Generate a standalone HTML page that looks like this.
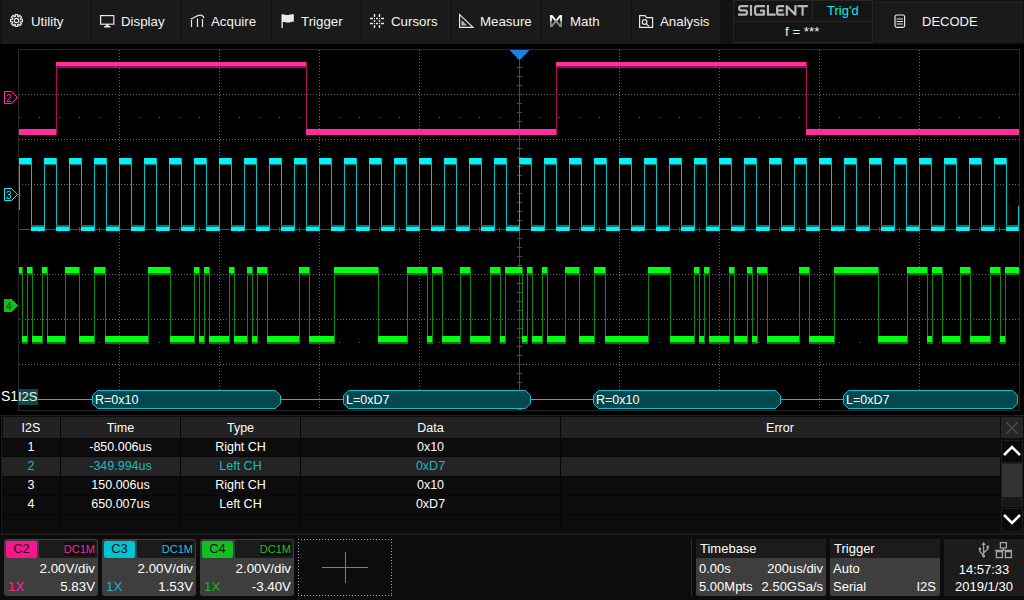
<!DOCTYPE html>
<html><head><meta charset="utf-8">
<style>
*{margin:0;padding:0;box-sizing:border-box}
html,body{width:1024px;height:600px;overflow:hidden;background:#000}
body{position:relative;font-family:"Liberation Sans",sans-serif;color:#fff}
.a{position:absolute}
.menu{left:0;top:0;width:1024px;height:44px;background:#1a1a1a}
.sep{top:0;width:1px;height:43px;background:#0e0e0e}
.mt{top:15px;font-size:13.3px;line-height:14px;color:#f4f4f4;white-space:nowrap}
.ic{top:0;left:0}
.tbl{left:0;top:415px;width:1024px;height:120px}
.th{font-size:12.5px;line-height:14px;text-align:center;white-space:nowrap}
.st{font-size:13px;line-height:14px;white-space:nowrap}
</style></head><body>
<!-- MENU -->
<div class="a menu"></div><div class="a" style="left:0;top:43px;width:720px;height:1px;background:#1e1e1e"></div><div class="a" style="left:0;top:0;width:2px;height:44px;background:#121212"></div>
<div class="a sep" style="left:91px"></div>
<div class="a sep" style="left:181px"></div>
<div class="a sep" style="left:271px"></div>
<div class="a sep" style="left:361px"></div>
<div class="a sep" style="left:451px"></div>
<div class="a sep" style="left:541px"></div>
<div class="a sep" style="left:631px"></div>
<div class="a" style="left:720px;top:0;width:13px;height:44px;background:#131313"></div>
<div class="a mt" style="left:31px">Utility</div>
<div class="a mt" style="left:121px">Display</div>
<div class="a mt" style="left:211px">Acquire</div>
<div class="a mt" style="left:301px">Trigger</div>
<div class="a mt" style="left:391px">Cursors</div>
<div class="a mt" style="left:480px">Measure</div>
<div class="a mt" style="left:570px">Math</div>
<div class="a mt" style="left:660px">Analysis</div>
<svg class="a ic" width="1024" height="44" viewBox="0 0 1024 44">
 <g fill="none" stroke="#e8e8e8" stroke-width="1.2">
  <!-- gear -->
  <path d="M20.52 19.27 L22.37 19.26 L22.37 21.74 L20.52 21.73 L20.21 22.47 L21.53 23.77 L19.77 25.53 L18.47 24.21 L17.73 24.52 L17.74 26.37 L15.26 26.37 L15.27 24.52 L14.53 24.21 L13.23 25.53 L11.47 23.77 L12.79 22.47 L12.48 21.73 L10.63 21.74 L10.63 19.26 L12.48 19.27 L12.79 18.53 L11.47 17.23 L13.23 15.47 L14.53 16.79 L15.27 16.48 L15.26 14.63 L17.74 14.63 L17.73 16.48 L18.47 16.79 L19.77 15.47 L21.53 17.23 L20.21 18.53Z"/>
  <circle cx="16.5" cy="20.5" r="2.2"/>
  <!-- monitor -->
  <rect x="100.6" y="15.6" width="13.2" height="8.6"/>
  <!-- acquire -->
  <path d="M190.5 19C194 18 197 15 200.5 15.2C202.5 15.3 203.5 16.5 204 18"/>
  <path d="M191.5 20V27M197.5 18.5V27M202.5 19V27"/>
  <!-- measure -->
  <path d="M459.6 14.6V27.4H473Z"/>
  <!-- analysis folder -->
  <path d="M639.6 15.6H645L646.6 17.6H652.6V27.4H639.6Z"/>
  <circle cx="644.6" cy="22" r="2.3"/>
  <path d="M646.4 23.8L649 26.4"/>
  <!-- math -->
  <path d="M550 15 552.3 15 556 19.5 559.7 15 562 15 562 21 560.2 21 560.2 17.6 556 22.4 551.8 17.6 551.8 21 550 21Z" fill="#f4f4f4" stroke="none"/>
  <path d="M550 27 552.3 27 556 22.5 559.7 27 562 27 562 21 560.2 21 560.2 24.4 556 19.6 551.8 24.4 551.8 21 550 21Z" fill="#8a8a8a" stroke="none"/>
  <!-- decode clipboard -->
  <rect x="895" y="15" width="9.6" height="12.4" rx="1.8"/>
  <path d="M896.5 19h6.5M896.5 21.5h6.5M896.5 24h6.5"/>
 </g>
 <g fill="#ececec">
  <rect x="106" y="24" width="2.5" height="2"/><rect x="104" y="26" width="6.5" height="1.4" rx=".6"/>
  <path d="M281.5 14.5C284 13.5 286 15.5 288 15C290 14.6 292 14 293.8 14.3V21.8C291.5 21.5 290 22.5 288 22.6C286 22.8 284.5 21.5 282.8 22V28H281.5Z"/>
  <path d="M373.8 14h1.4v3h-1.4zM378.8 14h1.4v3h-1.4zM373.8 20h1.4v2h-1.4zM378.8 20h1.4v2h-1.4zM373.8 25h1.4v3h-1.4zM378.8 25h1.4v3h-1.4zM370 17.8h3v1.4h-3zM376 17.8h2v1.4h-2zM381 17.8h3v1.4h-3zM370 22.8h3v1.4h-3zM376 22.8h2v1.4h-2zM381 22.8h3v1.4h-3z"/><path d="M374 18h1v1h-1zM379 18h1v1h-1zM374 23h1v1h-1zM379 23h1v1h-1z"/>
  <path d="M461.5 20V25.5H467Z" fill="#bbb"/>
  
  
 </g>
</svg>
<!-- SIGLENT box -->
<div class="a" style="left:733px;top:0;width:140px;height:43px;border:1px solid #262626;background:#141414"></div>
<div class="a" style="left:733px;top:21px;width:140px;height:1px;background:#262626"></div>
<div class="a" style="left:812px;top:0;width:1px;height:22px;background:#262626"></div>
<svg class="a" style="left:0;top:0" width="820" height="22" viewBox="0 0 820 22"><g fill="none" stroke="#b6b6b6" stroke-width="2.2" stroke-linejoin="round">
<path d="M748.2 6.1H741.2Q739.1 6.1 739.1 8.2V8.4Q739.1 10.4 741.2 10.4H745Q747 10.4 747 12.5V12.7Q747 14.7 745 14.7H738"/>
<path d="M751 5V15.8"/>
<path d="M765 6.1H757.1Q755.1 6.1 755.1 8.2V12.7Q755.1 14.7 757.1 14.7H763.9V10.6H760"/>
<path d="M767.9 5V14.7H775.6"/>
<path d="M784.2 6.1H779.1Q777.1 6.1 777.1 8.2V12.7Q777.1 14.7 779.1 14.7H784.2M777.6 10.4H783.4"/>
<path d="M786.8 15.8V6.2L795.4 14.6V5"/>
<path d="M797.4 6.1H807.9M802.6 6.1V15.8"/>
</g></svg>
<div class="a" style="left:827px;top:3px;font-size:13px;line-height:15px;color:#00eef2">Trig'd</div>
<div class="a" style="left:785px;top:25px;font-size:13.3px;line-height:14px;color:#f0f0f0">f = ***</div>
<div class="a" style="left:873px;top:0;width:151px;height:44px;background:#121212"></div><div class="a" style="left:874px;top:1px;width:149px;height:41px;background:#1a1a1a;border:1px solid #1e1e1e"></div>
<div class="a mt" style="left:922px;top:15px;font-size:13px">DECODE</div>
<svg class="a" style="left:0;top:0" width="1024" height="44" viewBox="0 0 1024 44"><g fill="none" stroke="#e8e8e8" stroke-width="1.2">
  <rect x="895" y="15" width="9.6" height="12.4" rx="1.8"/>
  <path d="M896.5 19h6.5M896.5 21.5h6.5M896.5 24h6.5"/></g></svg>

<!-- WAVE -->
<svg width="1024" height="600" viewBox="0 0 1024 600" shape-rendering="crispEdges" style="position:absolute;left:0;top:0"><rect x="18" y="49" width="1002" height="1" fill="#262626"/><rect x="18" y="410" width="1002" height="1" fill="#262626"/><rect x="18" y="49" width="1" height="362" fill="#262626"/><rect x="1019" y="49" width="1" height="362" fill="#262626"/><path d="M119 50h1v1h-1zM119 53h1v1h-1zM119 56h1v1h-1zM119 59h1v1h-1zM119 62h1v1h-1zM119 65h1v1h-1zM119 68h1v1h-1zM119 71h1v1h-1zM119 74h1v1h-1zM119 77h1v1h-1zM119 80h1v1h-1zM119 83h1v1h-1zM119 86h1v1h-1zM119 89h1v1h-1zM119 92h1v1h-1zM119 95h1v1h-1zM119 98h1v1h-1zM119 101h1v1h-1zM119 104h1v1h-1zM119 107h1v1h-1zM119 110h1v1h-1zM119 113h1v1h-1zM119 116h1v1h-1zM119 119h1v1h-1zM119 122h1v1h-1zM119 125h1v1h-1zM119 128h1v1h-1zM119 131h1v1h-1zM119 134h1v1h-1zM119 137h1v1h-1zM119 140h1v1h-1zM119 143h1v1h-1zM119 146h1v1h-1zM119 149h1v1h-1zM119 152h1v1h-1zM119 155h1v1h-1zM119 158h1v1h-1zM119 161h1v1h-1zM119 164h1v1h-1zM119 167h1v1h-1zM119 170h1v1h-1zM119 173h1v1h-1zM119 176h1v1h-1zM119 179h1v1h-1zM119 182h1v1h-1zM119 185h1v1h-1zM119 188h1v1h-1zM119 191h1v1h-1zM119 194h1v1h-1zM119 197h1v1h-1zM119 200h1v1h-1zM119 203h1v1h-1zM119 206h1v1h-1zM119 209h1v1h-1zM119 212h1v1h-1zM119 215h1v1h-1zM119 218h1v1h-1zM119 221h1v1h-1zM119 224h1v1h-1zM119 227h1v1h-1zM119 230h1v1h-1zM119 233h1v1h-1zM119 236h1v1h-1zM119 239h1v1h-1zM119 242h1v1h-1zM119 245h1v1h-1zM119 248h1v1h-1zM119 251h1v1h-1zM119 254h1v1h-1zM119 257h1v1h-1zM119 260h1v1h-1zM119 263h1v1h-1zM119 266h1v1h-1zM119 269h1v1h-1zM119 272h1v1h-1zM119 275h1v1h-1zM119 278h1v1h-1zM119 281h1v1h-1zM119 284h1v1h-1zM119 287h1v1h-1zM119 290h1v1h-1zM119 293h1v1h-1zM119 296h1v1h-1zM119 299h1v1h-1zM119 302h1v1h-1zM119 305h1v1h-1zM119 308h1v1h-1zM119 311h1v1h-1zM119 314h1v1h-1zM119 317h1v1h-1zM119 320h1v1h-1zM119 323h1v1h-1zM119 326h1v1h-1zM119 329h1v1h-1zM119 332h1v1h-1zM119 335h1v1h-1zM119 338h1v1h-1zM119 341h1v1h-1zM119 344h1v1h-1zM119 347h1v1h-1zM119 350h1v1h-1zM119 353h1v1h-1zM119 356h1v1h-1zM119 359h1v1h-1zM119 362h1v1h-1zM119 365h1v1h-1zM119 368h1v1h-1zM119 371h1v1h-1zM119 374h1v1h-1zM119 377h1v1h-1zM119 380h1v1h-1zM119 383h1v1h-1zM119 386h1v1h-1zM119 389h1v1h-1zM119 392h1v1h-1zM119 395h1v1h-1zM119 398h1v1h-1zM119 401h1v1h-1zM119 404h1v1h-1zM119 407h1v1h-1zM219 50h1v1h-1zM219 53h1v1h-1zM219 56h1v1h-1zM219 59h1v1h-1zM219 62h1v1h-1zM219 65h1v1h-1zM219 68h1v1h-1zM219 71h1v1h-1zM219 74h1v1h-1zM219 77h1v1h-1zM219 80h1v1h-1zM219 83h1v1h-1zM219 86h1v1h-1zM219 89h1v1h-1zM219 92h1v1h-1zM219 95h1v1h-1zM219 98h1v1h-1zM219 101h1v1h-1zM219 104h1v1h-1zM219 107h1v1h-1zM219 110h1v1h-1zM219 113h1v1h-1zM219 116h1v1h-1zM219 119h1v1h-1zM219 122h1v1h-1zM219 125h1v1h-1zM219 128h1v1h-1zM219 131h1v1h-1zM219 134h1v1h-1zM219 137h1v1h-1zM219 140h1v1h-1zM219 143h1v1h-1zM219 146h1v1h-1zM219 149h1v1h-1zM219 152h1v1h-1zM219 155h1v1h-1zM219 158h1v1h-1zM219 161h1v1h-1zM219 164h1v1h-1zM219 167h1v1h-1zM219 170h1v1h-1zM219 173h1v1h-1zM219 176h1v1h-1zM219 179h1v1h-1zM219 182h1v1h-1zM219 185h1v1h-1zM219 188h1v1h-1zM219 191h1v1h-1zM219 194h1v1h-1zM219 197h1v1h-1zM219 200h1v1h-1zM219 203h1v1h-1zM219 206h1v1h-1zM219 209h1v1h-1zM219 212h1v1h-1zM219 215h1v1h-1zM219 218h1v1h-1zM219 221h1v1h-1zM219 224h1v1h-1zM219 227h1v1h-1zM219 230h1v1h-1zM219 233h1v1h-1zM219 236h1v1h-1zM219 239h1v1h-1zM219 242h1v1h-1zM219 245h1v1h-1zM219 248h1v1h-1zM219 251h1v1h-1zM219 254h1v1h-1zM219 257h1v1h-1zM219 260h1v1h-1zM219 263h1v1h-1zM219 266h1v1h-1zM219 269h1v1h-1zM219 272h1v1h-1zM219 275h1v1h-1zM219 278h1v1h-1zM219 281h1v1h-1zM219 284h1v1h-1zM219 287h1v1h-1zM219 290h1v1h-1zM219 293h1v1h-1zM219 296h1v1h-1zM219 299h1v1h-1zM219 302h1v1h-1zM219 305h1v1h-1zM219 308h1v1h-1zM219 311h1v1h-1zM219 314h1v1h-1zM219 317h1v1h-1zM219 320h1v1h-1zM219 323h1v1h-1zM219 326h1v1h-1zM219 329h1v1h-1zM219 332h1v1h-1zM219 335h1v1h-1zM219 338h1v1h-1zM219 341h1v1h-1zM219 344h1v1h-1zM219 347h1v1h-1zM219 350h1v1h-1zM219 353h1v1h-1zM219 356h1v1h-1zM219 359h1v1h-1zM219 362h1v1h-1zM219 365h1v1h-1zM219 368h1v1h-1zM219 371h1v1h-1zM219 374h1v1h-1zM219 377h1v1h-1zM219 380h1v1h-1zM219 383h1v1h-1zM219 386h1v1h-1zM219 389h1v1h-1zM219 392h1v1h-1zM219 395h1v1h-1zM219 398h1v1h-1zM219 401h1v1h-1zM219 404h1v1h-1zM219 407h1v1h-1zM319 50h1v1h-1zM319 53h1v1h-1zM319 56h1v1h-1zM319 59h1v1h-1zM319 62h1v1h-1zM319 65h1v1h-1zM319 68h1v1h-1zM319 71h1v1h-1zM319 74h1v1h-1zM319 77h1v1h-1zM319 80h1v1h-1zM319 83h1v1h-1zM319 86h1v1h-1zM319 89h1v1h-1zM319 92h1v1h-1zM319 95h1v1h-1zM319 98h1v1h-1zM319 101h1v1h-1zM319 104h1v1h-1zM319 107h1v1h-1zM319 110h1v1h-1zM319 113h1v1h-1zM319 116h1v1h-1zM319 119h1v1h-1zM319 122h1v1h-1zM319 125h1v1h-1zM319 128h1v1h-1zM319 131h1v1h-1zM319 134h1v1h-1zM319 137h1v1h-1zM319 140h1v1h-1zM319 143h1v1h-1zM319 146h1v1h-1zM319 149h1v1h-1zM319 152h1v1h-1zM319 155h1v1h-1zM319 158h1v1h-1zM319 161h1v1h-1zM319 164h1v1h-1zM319 167h1v1h-1zM319 170h1v1h-1zM319 173h1v1h-1zM319 176h1v1h-1zM319 179h1v1h-1zM319 182h1v1h-1zM319 185h1v1h-1zM319 188h1v1h-1zM319 191h1v1h-1zM319 194h1v1h-1zM319 197h1v1h-1zM319 200h1v1h-1zM319 203h1v1h-1zM319 206h1v1h-1zM319 209h1v1h-1zM319 212h1v1h-1zM319 215h1v1h-1zM319 218h1v1h-1zM319 221h1v1h-1zM319 224h1v1h-1zM319 227h1v1h-1zM319 230h1v1h-1zM319 233h1v1h-1zM319 236h1v1h-1zM319 239h1v1h-1zM319 242h1v1h-1zM319 245h1v1h-1zM319 248h1v1h-1zM319 251h1v1h-1zM319 254h1v1h-1zM319 257h1v1h-1zM319 260h1v1h-1zM319 263h1v1h-1zM319 266h1v1h-1zM319 269h1v1h-1zM319 272h1v1h-1zM319 275h1v1h-1zM319 278h1v1h-1zM319 281h1v1h-1zM319 284h1v1h-1zM319 287h1v1h-1zM319 290h1v1h-1zM319 293h1v1h-1zM319 296h1v1h-1zM319 299h1v1h-1zM319 302h1v1h-1zM319 305h1v1h-1zM319 308h1v1h-1zM319 311h1v1h-1zM319 314h1v1h-1zM319 317h1v1h-1zM319 320h1v1h-1zM319 323h1v1h-1zM319 326h1v1h-1zM319 329h1v1h-1zM319 332h1v1h-1zM319 335h1v1h-1zM319 338h1v1h-1zM319 341h1v1h-1zM319 344h1v1h-1zM319 347h1v1h-1zM319 350h1v1h-1zM319 353h1v1h-1zM319 356h1v1h-1zM319 359h1v1h-1zM319 362h1v1h-1zM319 365h1v1h-1zM319 368h1v1h-1zM319 371h1v1h-1zM319 374h1v1h-1zM319 377h1v1h-1zM319 380h1v1h-1zM319 383h1v1h-1zM319 386h1v1h-1zM319 389h1v1h-1zM319 392h1v1h-1zM319 395h1v1h-1zM319 398h1v1h-1zM319 401h1v1h-1zM319 404h1v1h-1zM319 407h1v1h-1zM419 50h1v1h-1zM419 53h1v1h-1zM419 56h1v1h-1zM419 59h1v1h-1zM419 62h1v1h-1zM419 65h1v1h-1zM419 68h1v1h-1zM419 71h1v1h-1zM419 74h1v1h-1zM419 77h1v1h-1zM419 80h1v1h-1zM419 83h1v1h-1zM419 86h1v1h-1zM419 89h1v1h-1zM419 92h1v1h-1zM419 95h1v1h-1zM419 98h1v1h-1zM419 101h1v1h-1zM419 104h1v1h-1zM419 107h1v1h-1zM419 110h1v1h-1zM419 113h1v1h-1zM419 116h1v1h-1zM419 119h1v1h-1zM419 122h1v1h-1zM419 125h1v1h-1zM419 128h1v1h-1zM419 131h1v1h-1zM419 134h1v1h-1zM419 137h1v1h-1zM419 140h1v1h-1zM419 143h1v1h-1zM419 146h1v1h-1zM419 149h1v1h-1zM419 152h1v1h-1zM419 155h1v1h-1zM419 158h1v1h-1zM419 161h1v1h-1zM419 164h1v1h-1zM419 167h1v1h-1zM419 170h1v1h-1zM419 173h1v1h-1zM419 176h1v1h-1zM419 179h1v1h-1zM419 182h1v1h-1zM419 185h1v1h-1zM419 188h1v1h-1zM419 191h1v1h-1zM419 194h1v1h-1zM419 197h1v1h-1zM419 200h1v1h-1zM419 203h1v1h-1zM419 206h1v1h-1zM419 209h1v1h-1zM419 212h1v1h-1zM419 215h1v1h-1zM419 218h1v1h-1zM419 221h1v1h-1zM419 224h1v1h-1zM419 227h1v1h-1zM419 230h1v1h-1zM419 233h1v1h-1zM419 236h1v1h-1zM419 239h1v1h-1zM419 242h1v1h-1zM419 245h1v1h-1zM419 248h1v1h-1zM419 251h1v1h-1zM419 254h1v1h-1zM419 257h1v1h-1zM419 260h1v1h-1zM419 263h1v1h-1zM419 266h1v1h-1zM419 269h1v1h-1zM419 272h1v1h-1zM419 275h1v1h-1zM419 278h1v1h-1zM419 281h1v1h-1zM419 284h1v1h-1zM419 287h1v1h-1zM419 290h1v1h-1zM419 293h1v1h-1zM419 296h1v1h-1zM419 299h1v1h-1zM419 302h1v1h-1zM419 305h1v1h-1zM419 308h1v1h-1zM419 311h1v1h-1zM419 314h1v1h-1zM419 317h1v1h-1zM419 320h1v1h-1zM419 323h1v1h-1zM419 326h1v1h-1zM419 329h1v1h-1zM419 332h1v1h-1zM419 335h1v1h-1zM419 338h1v1h-1zM419 341h1v1h-1zM419 344h1v1h-1zM419 347h1v1h-1zM419 350h1v1h-1zM419 353h1v1h-1zM419 356h1v1h-1zM419 359h1v1h-1zM419 362h1v1h-1zM419 365h1v1h-1zM419 368h1v1h-1zM419 371h1v1h-1zM419 374h1v1h-1zM419 377h1v1h-1zM419 380h1v1h-1zM419 383h1v1h-1zM419 386h1v1h-1zM419 389h1v1h-1zM419 392h1v1h-1zM419 395h1v1h-1zM419 398h1v1h-1zM419 401h1v1h-1zM419 404h1v1h-1zM419 407h1v1h-1zM619 50h1v1h-1zM619 53h1v1h-1zM619 56h1v1h-1zM619 59h1v1h-1zM619 62h1v1h-1zM619 65h1v1h-1zM619 68h1v1h-1zM619 71h1v1h-1zM619 74h1v1h-1zM619 77h1v1h-1zM619 80h1v1h-1zM619 83h1v1h-1zM619 86h1v1h-1zM619 89h1v1h-1zM619 92h1v1h-1zM619 95h1v1h-1zM619 98h1v1h-1zM619 101h1v1h-1zM619 104h1v1h-1zM619 107h1v1h-1zM619 110h1v1h-1zM619 113h1v1h-1zM619 116h1v1h-1zM619 119h1v1h-1zM619 122h1v1h-1zM619 125h1v1h-1zM619 128h1v1h-1zM619 131h1v1h-1zM619 134h1v1h-1zM619 137h1v1h-1zM619 140h1v1h-1zM619 143h1v1h-1zM619 146h1v1h-1zM619 149h1v1h-1zM619 152h1v1h-1zM619 155h1v1h-1zM619 158h1v1h-1zM619 161h1v1h-1zM619 164h1v1h-1zM619 167h1v1h-1zM619 170h1v1h-1zM619 173h1v1h-1zM619 176h1v1h-1zM619 179h1v1h-1zM619 182h1v1h-1zM619 185h1v1h-1zM619 188h1v1h-1zM619 191h1v1h-1zM619 194h1v1h-1zM619 197h1v1h-1zM619 200h1v1h-1zM619 203h1v1h-1zM619 206h1v1h-1zM619 209h1v1h-1zM619 212h1v1h-1zM619 215h1v1h-1zM619 218h1v1h-1zM619 221h1v1h-1zM619 224h1v1h-1zM619 227h1v1h-1zM619 230h1v1h-1zM619 233h1v1h-1zM619 236h1v1h-1zM619 239h1v1h-1zM619 242h1v1h-1zM619 245h1v1h-1zM619 248h1v1h-1zM619 251h1v1h-1zM619 254h1v1h-1zM619 257h1v1h-1zM619 260h1v1h-1zM619 263h1v1h-1zM619 266h1v1h-1zM619 269h1v1h-1zM619 272h1v1h-1zM619 275h1v1h-1zM619 278h1v1h-1zM619 281h1v1h-1zM619 284h1v1h-1zM619 287h1v1h-1zM619 290h1v1h-1zM619 293h1v1h-1zM619 296h1v1h-1zM619 299h1v1h-1zM619 302h1v1h-1zM619 305h1v1h-1zM619 308h1v1h-1zM619 311h1v1h-1zM619 314h1v1h-1zM619 317h1v1h-1zM619 320h1v1h-1zM619 323h1v1h-1zM619 326h1v1h-1zM619 329h1v1h-1zM619 332h1v1h-1zM619 335h1v1h-1zM619 338h1v1h-1zM619 341h1v1h-1zM619 344h1v1h-1zM619 347h1v1h-1zM619 350h1v1h-1zM619 353h1v1h-1zM619 356h1v1h-1zM619 359h1v1h-1zM619 362h1v1h-1zM619 365h1v1h-1zM619 368h1v1h-1zM619 371h1v1h-1zM619 374h1v1h-1zM619 377h1v1h-1zM619 380h1v1h-1zM619 383h1v1h-1zM619 386h1v1h-1zM619 389h1v1h-1zM619 392h1v1h-1zM619 395h1v1h-1zM619 398h1v1h-1zM619 401h1v1h-1zM619 404h1v1h-1zM619 407h1v1h-1zM719 50h1v1h-1zM719 53h1v1h-1zM719 56h1v1h-1zM719 59h1v1h-1zM719 62h1v1h-1zM719 65h1v1h-1zM719 68h1v1h-1zM719 71h1v1h-1zM719 74h1v1h-1zM719 77h1v1h-1zM719 80h1v1h-1zM719 83h1v1h-1zM719 86h1v1h-1zM719 89h1v1h-1zM719 92h1v1h-1zM719 95h1v1h-1zM719 98h1v1h-1zM719 101h1v1h-1zM719 104h1v1h-1zM719 107h1v1h-1zM719 110h1v1h-1zM719 113h1v1h-1zM719 116h1v1h-1zM719 119h1v1h-1zM719 122h1v1h-1zM719 125h1v1h-1zM719 128h1v1h-1zM719 131h1v1h-1zM719 134h1v1h-1zM719 137h1v1h-1zM719 140h1v1h-1zM719 143h1v1h-1zM719 146h1v1h-1zM719 149h1v1h-1zM719 152h1v1h-1zM719 155h1v1h-1zM719 158h1v1h-1zM719 161h1v1h-1zM719 164h1v1h-1zM719 167h1v1h-1zM719 170h1v1h-1zM719 173h1v1h-1zM719 176h1v1h-1zM719 179h1v1h-1zM719 182h1v1h-1zM719 185h1v1h-1zM719 188h1v1h-1zM719 191h1v1h-1zM719 194h1v1h-1zM719 197h1v1h-1zM719 200h1v1h-1zM719 203h1v1h-1zM719 206h1v1h-1zM719 209h1v1h-1zM719 212h1v1h-1zM719 215h1v1h-1zM719 218h1v1h-1zM719 221h1v1h-1zM719 224h1v1h-1zM719 227h1v1h-1zM719 230h1v1h-1zM719 233h1v1h-1zM719 236h1v1h-1zM719 239h1v1h-1zM719 242h1v1h-1zM719 245h1v1h-1zM719 248h1v1h-1zM719 251h1v1h-1zM719 254h1v1h-1zM719 257h1v1h-1zM719 260h1v1h-1zM719 263h1v1h-1zM719 266h1v1h-1zM719 269h1v1h-1zM719 272h1v1h-1zM719 275h1v1h-1zM719 278h1v1h-1zM719 281h1v1h-1zM719 284h1v1h-1zM719 287h1v1h-1zM719 290h1v1h-1zM719 293h1v1h-1zM719 296h1v1h-1zM719 299h1v1h-1zM719 302h1v1h-1zM719 305h1v1h-1zM719 308h1v1h-1zM719 311h1v1h-1zM719 314h1v1h-1zM719 317h1v1h-1zM719 320h1v1h-1zM719 323h1v1h-1zM719 326h1v1h-1zM719 329h1v1h-1zM719 332h1v1h-1zM719 335h1v1h-1zM719 338h1v1h-1zM719 341h1v1h-1zM719 344h1v1h-1zM719 347h1v1h-1zM719 350h1v1h-1zM719 353h1v1h-1zM719 356h1v1h-1zM719 359h1v1h-1zM719 362h1v1h-1zM719 365h1v1h-1zM719 368h1v1h-1zM719 371h1v1h-1zM719 374h1v1h-1zM719 377h1v1h-1zM719 380h1v1h-1zM719 383h1v1h-1zM719 386h1v1h-1zM719 389h1v1h-1zM719 392h1v1h-1zM719 395h1v1h-1zM719 398h1v1h-1zM719 401h1v1h-1zM719 404h1v1h-1zM719 407h1v1h-1zM819 50h1v1h-1zM819 53h1v1h-1zM819 56h1v1h-1zM819 59h1v1h-1zM819 62h1v1h-1zM819 65h1v1h-1zM819 68h1v1h-1zM819 71h1v1h-1zM819 74h1v1h-1zM819 77h1v1h-1zM819 80h1v1h-1zM819 83h1v1h-1zM819 86h1v1h-1zM819 89h1v1h-1zM819 92h1v1h-1zM819 95h1v1h-1zM819 98h1v1h-1zM819 101h1v1h-1zM819 104h1v1h-1zM819 107h1v1h-1zM819 110h1v1h-1zM819 113h1v1h-1zM819 116h1v1h-1zM819 119h1v1h-1zM819 122h1v1h-1zM819 125h1v1h-1zM819 128h1v1h-1zM819 131h1v1h-1zM819 134h1v1h-1zM819 137h1v1h-1zM819 140h1v1h-1zM819 143h1v1h-1zM819 146h1v1h-1zM819 149h1v1h-1zM819 152h1v1h-1zM819 155h1v1h-1zM819 158h1v1h-1zM819 161h1v1h-1zM819 164h1v1h-1zM819 167h1v1h-1zM819 170h1v1h-1zM819 173h1v1h-1zM819 176h1v1h-1zM819 179h1v1h-1zM819 182h1v1h-1zM819 185h1v1h-1zM819 188h1v1h-1zM819 191h1v1h-1zM819 194h1v1h-1zM819 197h1v1h-1zM819 200h1v1h-1zM819 203h1v1h-1zM819 206h1v1h-1zM819 209h1v1h-1zM819 212h1v1h-1zM819 215h1v1h-1zM819 218h1v1h-1zM819 221h1v1h-1zM819 224h1v1h-1zM819 227h1v1h-1zM819 230h1v1h-1zM819 233h1v1h-1zM819 236h1v1h-1zM819 239h1v1h-1zM819 242h1v1h-1zM819 245h1v1h-1zM819 248h1v1h-1zM819 251h1v1h-1zM819 254h1v1h-1zM819 257h1v1h-1zM819 260h1v1h-1zM819 263h1v1h-1zM819 266h1v1h-1zM819 269h1v1h-1zM819 272h1v1h-1zM819 275h1v1h-1zM819 278h1v1h-1zM819 281h1v1h-1zM819 284h1v1h-1zM819 287h1v1h-1zM819 290h1v1h-1zM819 293h1v1h-1zM819 296h1v1h-1zM819 299h1v1h-1zM819 302h1v1h-1zM819 305h1v1h-1zM819 308h1v1h-1zM819 311h1v1h-1zM819 314h1v1h-1zM819 317h1v1h-1zM819 320h1v1h-1zM819 323h1v1h-1zM819 326h1v1h-1zM819 329h1v1h-1zM819 332h1v1h-1zM819 335h1v1h-1zM819 338h1v1h-1zM819 341h1v1h-1zM819 344h1v1h-1zM819 347h1v1h-1zM819 350h1v1h-1zM819 353h1v1h-1zM819 356h1v1h-1zM819 359h1v1h-1zM819 362h1v1h-1zM819 365h1v1h-1zM819 368h1v1h-1zM819 371h1v1h-1zM819 374h1v1h-1zM819 377h1v1h-1zM819 380h1v1h-1zM819 383h1v1h-1zM819 386h1v1h-1zM819 389h1v1h-1zM819 392h1v1h-1zM819 395h1v1h-1zM819 398h1v1h-1zM819 401h1v1h-1zM819 404h1v1h-1zM819 407h1v1h-1zM919 50h1v1h-1zM919 53h1v1h-1zM919 56h1v1h-1zM919 59h1v1h-1zM919 62h1v1h-1zM919 65h1v1h-1zM919 68h1v1h-1zM919 71h1v1h-1zM919 74h1v1h-1zM919 77h1v1h-1zM919 80h1v1h-1zM919 83h1v1h-1zM919 86h1v1h-1zM919 89h1v1h-1zM919 92h1v1h-1zM919 95h1v1h-1zM919 98h1v1h-1zM919 101h1v1h-1zM919 104h1v1h-1zM919 107h1v1h-1zM919 110h1v1h-1zM919 113h1v1h-1zM919 116h1v1h-1zM919 119h1v1h-1zM919 122h1v1h-1zM919 125h1v1h-1zM919 128h1v1h-1zM919 131h1v1h-1zM919 134h1v1h-1zM919 137h1v1h-1zM919 140h1v1h-1zM919 143h1v1h-1zM919 146h1v1h-1zM919 149h1v1h-1zM919 152h1v1h-1zM919 155h1v1h-1zM919 158h1v1h-1zM919 161h1v1h-1zM919 164h1v1h-1zM919 167h1v1h-1zM919 170h1v1h-1zM919 173h1v1h-1zM919 176h1v1h-1zM919 179h1v1h-1zM919 182h1v1h-1zM919 185h1v1h-1zM919 188h1v1h-1zM919 191h1v1h-1zM919 194h1v1h-1zM919 197h1v1h-1zM919 200h1v1h-1zM919 203h1v1h-1zM919 206h1v1h-1zM919 209h1v1h-1zM919 212h1v1h-1zM919 215h1v1h-1zM919 218h1v1h-1zM919 221h1v1h-1zM919 224h1v1h-1zM919 227h1v1h-1zM919 230h1v1h-1zM919 233h1v1h-1zM919 236h1v1h-1zM919 239h1v1h-1zM919 242h1v1h-1zM919 245h1v1h-1zM919 248h1v1h-1zM919 251h1v1h-1zM919 254h1v1h-1zM919 257h1v1h-1zM919 260h1v1h-1zM919 263h1v1h-1zM919 266h1v1h-1zM919 269h1v1h-1zM919 272h1v1h-1zM919 275h1v1h-1zM919 278h1v1h-1zM919 281h1v1h-1zM919 284h1v1h-1zM919 287h1v1h-1zM919 290h1v1h-1zM919 293h1v1h-1zM919 296h1v1h-1zM919 299h1v1h-1zM919 302h1v1h-1zM919 305h1v1h-1zM919 308h1v1h-1zM919 311h1v1h-1zM919 314h1v1h-1zM919 317h1v1h-1zM919 320h1v1h-1zM919 323h1v1h-1zM919 326h1v1h-1zM919 329h1v1h-1zM919 332h1v1h-1zM919 335h1v1h-1zM919 338h1v1h-1zM919 341h1v1h-1zM919 344h1v1h-1zM919 347h1v1h-1zM919 350h1v1h-1zM919 353h1v1h-1zM919 356h1v1h-1zM919 359h1v1h-1zM919 362h1v1h-1zM919 365h1v1h-1zM919 368h1v1h-1zM919 371h1v1h-1zM919 374h1v1h-1zM919 377h1v1h-1zM919 380h1v1h-1zM919 383h1v1h-1zM919 386h1v1h-1zM919 389h1v1h-1zM919 392h1v1h-1zM919 395h1v1h-1zM919 398h1v1h-1zM919 401h1v1h-1zM919 404h1v1h-1zM919 407h1v1h-1zM19 94h1v1h-1zM22 94h1v1h-1zM25 94h1v1h-1zM28 94h1v1h-1zM31 94h1v1h-1zM34 94h1v1h-1zM37 94h1v1h-1zM40 94h1v1h-1zM43 94h1v1h-1zM46 94h1v1h-1zM49 94h1v1h-1zM52 94h1v1h-1zM55 94h1v1h-1zM58 94h1v1h-1zM61 94h1v1h-1zM64 94h1v1h-1zM67 94h1v1h-1zM70 94h1v1h-1zM73 94h1v1h-1zM76 94h1v1h-1zM79 94h1v1h-1zM82 94h1v1h-1zM85 94h1v1h-1zM88 94h1v1h-1zM91 94h1v1h-1zM94 94h1v1h-1zM97 94h1v1h-1zM100 94h1v1h-1zM103 94h1v1h-1zM106 94h1v1h-1zM109 94h1v1h-1zM112 94h1v1h-1zM115 94h1v1h-1zM118 94h1v1h-1zM121 94h1v1h-1zM124 94h1v1h-1zM127 94h1v1h-1zM130 94h1v1h-1zM133 94h1v1h-1zM136 94h1v1h-1zM139 94h1v1h-1zM142 94h1v1h-1zM145 94h1v1h-1zM148 94h1v1h-1zM151 94h1v1h-1zM154 94h1v1h-1zM157 94h1v1h-1zM160 94h1v1h-1zM163 94h1v1h-1zM166 94h1v1h-1zM169 94h1v1h-1zM172 94h1v1h-1zM175 94h1v1h-1zM178 94h1v1h-1zM181 94h1v1h-1zM184 94h1v1h-1zM187 94h1v1h-1zM190 94h1v1h-1zM193 94h1v1h-1zM196 94h1v1h-1zM199 94h1v1h-1zM202 94h1v1h-1zM205 94h1v1h-1zM208 94h1v1h-1zM211 94h1v1h-1zM214 94h1v1h-1zM217 94h1v1h-1zM220 94h1v1h-1zM223 94h1v1h-1zM226 94h1v1h-1zM229 94h1v1h-1zM232 94h1v1h-1zM235 94h1v1h-1zM238 94h1v1h-1zM241 94h1v1h-1zM244 94h1v1h-1zM247 94h1v1h-1zM250 94h1v1h-1zM253 94h1v1h-1zM256 94h1v1h-1zM259 94h1v1h-1zM262 94h1v1h-1zM265 94h1v1h-1zM268 94h1v1h-1zM271 94h1v1h-1zM274 94h1v1h-1zM277 94h1v1h-1zM280 94h1v1h-1zM283 94h1v1h-1zM286 94h1v1h-1zM289 94h1v1h-1zM292 94h1v1h-1zM295 94h1v1h-1zM298 94h1v1h-1zM301 94h1v1h-1zM304 94h1v1h-1zM307 94h1v1h-1zM310 94h1v1h-1zM313 94h1v1h-1zM316 94h1v1h-1zM319 94h1v1h-1zM322 94h1v1h-1zM325 94h1v1h-1zM328 94h1v1h-1zM331 94h1v1h-1zM334 94h1v1h-1zM337 94h1v1h-1zM340 94h1v1h-1zM343 94h1v1h-1zM346 94h1v1h-1zM349 94h1v1h-1zM352 94h1v1h-1zM355 94h1v1h-1zM358 94h1v1h-1zM361 94h1v1h-1zM364 94h1v1h-1zM367 94h1v1h-1zM370 94h1v1h-1zM373 94h1v1h-1zM376 94h1v1h-1zM379 94h1v1h-1zM382 94h1v1h-1zM385 94h1v1h-1zM388 94h1v1h-1zM391 94h1v1h-1zM394 94h1v1h-1zM397 94h1v1h-1zM400 94h1v1h-1zM403 94h1v1h-1zM406 94h1v1h-1zM409 94h1v1h-1zM412 94h1v1h-1zM415 94h1v1h-1zM418 94h1v1h-1zM421 94h1v1h-1zM424 94h1v1h-1zM427 94h1v1h-1zM430 94h1v1h-1zM433 94h1v1h-1zM436 94h1v1h-1zM439 94h1v1h-1zM442 94h1v1h-1zM445 94h1v1h-1zM448 94h1v1h-1zM451 94h1v1h-1zM454 94h1v1h-1zM457 94h1v1h-1zM460 94h1v1h-1zM463 94h1v1h-1zM466 94h1v1h-1zM469 94h1v1h-1zM472 94h1v1h-1zM475 94h1v1h-1zM478 94h1v1h-1zM481 94h1v1h-1zM484 94h1v1h-1zM487 94h1v1h-1zM490 94h1v1h-1zM493 94h1v1h-1zM496 94h1v1h-1zM499 94h1v1h-1zM502 94h1v1h-1zM505 94h1v1h-1zM508 94h1v1h-1zM511 94h1v1h-1zM514 94h1v1h-1zM517 94h1v1h-1zM520 94h1v1h-1zM523 94h1v1h-1zM526 94h1v1h-1zM529 94h1v1h-1zM532 94h1v1h-1zM535 94h1v1h-1zM538 94h1v1h-1zM541 94h1v1h-1zM544 94h1v1h-1zM547 94h1v1h-1zM550 94h1v1h-1zM553 94h1v1h-1zM556 94h1v1h-1zM559 94h1v1h-1zM562 94h1v1h-1zM565 94h1v1h-1zM568 94h1v1h-1zM571 94h1v1h-1zM574 94h1v1h-1zM577 94h1v1h-1zM580 94h1v1h-1zM583 94h1v1h-1zM586 94h1v1h-1zM589 94h1v1h-1zM592 94h1v1h-1zM595 94h1v1h-1zM598 94h1v1h-1zM601 94h1v1h-1zM604 94h1v1h-1zM607 94h1v1h-1zM610 94h1v1h-1zM613 94h1v1h-1zM616 94h1v1h-1zM619 94h1v1h-1zM622 94h1v1h-1zM625 94h1v1h-1zM628 94h1v1h-1zM631 94h1v1h-1zM634 94h1v1h-1zM637 94h1v1h-1zM640 94h1v1h-1zM643 94h1v1h-1zM646 94h1v1h-1zM649 94h1v1h-1zM652 94h1v1h-1zM655 94h1v1h-1zM658 94h1v1h-1zM661 94h1v1h-1zM664 94h1v1h-1zM667 94h1v1h-1zM670 94h1v1h-1zM673 94h1v1h-1zM676 94h1v1h-1zM679 94h1v1h-1zM682 94h1v1h-1zM685 94h1v1h-1zM688 94h1v1h-1zM691 94h1v1h-1zM694 94h1v1h-1zM697 94h1v1h-1zM700 94h1v1h-1zM703 94h1v1h-1zM706 94h1v1h-1zM709 94h1v1h-1zM712 94h1v1h-1zM715 94h1v1h-1zM718 94h1v1h-1zM721 94h1v1h-1zM724 94h1v1h-1zM727 94h1v1h-1zM730 94h1v1h-1zM733 94h1v1h-1zM736 94h1v1h-1zM739 94h1v1h-1zM742 94h1v1h-1zM745 94h1v1h-1zM748 94h1v1h-1zM751 94h1v1h-1zM754 94h1v1h-1zM757 94h1v1h-1zM760 94h1v1h-1zM763 94h1v1h-1zM766 94h1v1h-1zM769 94h1v1h-1zM772 94h1v1h-1zM775 94h1v1h-1zM778 94h1v1h-1zM781 94h1v1h-1zM784 94h1v1h-1zM787 94h1v1h-1zM790 94h1v1h-1zM793 94h1v1h-1zM796 94h1v1h-1zM799 94h1v1h-1zM802 94h1v1h-1zM805 94h1v1h-1zM808 94h1v1h-1zM811 94h1v1h-1zM814 94h1v1h-1zM817 94h1v1h-1zM820 94h1v1h-1zM823 94h1v1h-1zM826 94h1v1h-1zM829 94h1v1h-1zM832 94h1v1h-1zM835 94h1v1h-1zM838 94h1v1h-1zM841 94h1v1h-1zM844 94h1v1h-1zM847 94h1v1h-1zM850 94h1v1h-1zM853 94h1v1h-1zM856 94h1v1h-1zM859 94h1v1h-1zM862 94h1v1h-1zM865 94h1v1h-1zM868 94h1v1h-1zM871 94h1v1h-1zM874 94h1v1h-1zM877 94h1v1h-1zM880 94h1v1h-1zM883 94h1v1h-1zM886 94h1v1h-1zM889 94h1v1h-1zM892 94h1v1h-1zM895 94h1v1h-1zM898 94h1v1h-1zM901 94h1v1h-1zM904 94h1v1h-1zM907 94h1v1h-1zM910 94h1v1h-1zM913 94h1v1h-1zM916 94h1v1h-1zM919 94h1v1h-1zM922 94h1v1h-1zM925 94h1v1h-1zM928 94h1v1h-1zM931 94h1v1h-1zM934 94h1v1h-1zM937 94h1v1h-1zM940 94h1v1h-1zM943 94h1v1h-1zM946 94h1v1h-1zM949 94h1v1h-1zM952 94h1v1h-1zM955 94h1v1h-1zM958 94h1v1h-1zM961 94h1v1h-1zM964 94h1v1h-1zM967 94h1v1h-1zM970 94h1v1h-1zM973 94h1v1h-1zM976 94h1v1h-1zM979 94h1v1h-1zM982 94h1v1h-1zM985 94h1v1h-1zM988 94h1v1h-1zM991 94h1v1h-1zM994 94h1v1h-1zM997 94h1v1h-1zM1000 94h1v1h-1zM1003 94h1v1h-1zM1006 94h1v1h-1zM1009 94h1v1h-1zM1012 94h1v1h-1zM1015 94h1v1h-1zM1018 94h1v1h-1zM19 139h1v1h-1zM22 139h1v1h-1zM25 139h1v1h-1zM28 139h1v1h-1zM31 139h1v1h-1zM34 139h1v1h-1zM37 139h1v1h-1zM40 139h1v1h-1zM43 139h1v1h-1zM46 139h1v1h-1zM49 139h1v1h-1zM52 139h1v1h-1zM55 139h1v1h-1zM58 139h1v1h-1zM61 139h1v1h-1zM64 139h1v1h-1zM67 139h1v1h-1zM70 139h1v1h-1zM73 139h1v1h-1zM76 139h1v1h-1zM79 139h1v1h-1zM82 139h1v1h-1zM85 139h1v1h-1zM88 139h1v1h-1zM91 139h1v1h-1zM94 139h1v1h-1zM97 139h1v1h-1zM100 139h1v1h-1zM103 139h1v1h-1zM106 139h1v1h-1zM109 139h1v1h-1zM112 139h1v1h-1zM115 139h1v1h-1zM118 139h1v1h-1zM121 139h1v1h-1zM124 139h1v1h-1zM127 139h1v1h-1zM130 139h1v1h-1zM133 139h1v1h-1zM136 139h1v1h-1zM139 139h1v1h-1zM142 139h1v1h-1zM145 139h1v1h-1zM148 139h1v1h-1zM151 139h1v1h-1zM154 139h1v1h-1zM157 139h1v1h-1zM160 139h1v1h-1zM163 139h1v1h-1zM166 139h1v1h-1zM169 139h1v1h-1zM172 139h1v1h-1zM175 139h1v1h-1zM178 139h1v1h-1zM181 139h1v1h-1zM184 139h1v1h-1zM187 139h1v1h-1zM190 139h1v1h-1zM193 139h1v1h-1zM196 139h1v1h-1zM199 139h1v1h-1zM202 139h1v1h-1zM205 139h1v1h-1zM208 139h1v1h-1zM211 139h1v1h-1zM214 139h1v1h-1zM217 139h1v1h-1zM220 139h1v1h-1zM223 139h1v1h-1zM226 139h1v1h-1zM229 139h1v1h-1zM232 139h1v1h-1zM235 139h1v1h-1zM238 139h1v1h-1zM241 139h1v1h-1zM244 139h1v1h-1zM247 139h1v1h-1zM250 139h1v1h-1zM253 139h1v1h-1zM256 139h1v1h-1zM259 139h1v1h-1zM262 139h1v1h-1zM265 139h1v1h-1zM268 139h1v1h-1zM271 139h1v1h-1zM274 139h1v1h-1zM277 139h1v1h-1zM280 139h1v1h-1zM283 139h1v1h-1zM286 139h1v1h-1zM289 139h1v1h-1zM292 139h1v1h-1zM295 139h1v1h-1zM298 139h1v1h-1zM301 139h1v1h-1zM304 139h1v1h-1zM307 139h1v1h-1zM310 139h1v1h-1zM313 139h1v1h-1zM316 139h1v1h-1zM319 139h1v1h-1zM322 139h1v1h-1zM325 139h1v1h-1zM328 139h1v1h-1zM331 139h1v1h-1zM334 139h1v1h-1zM337 139h1v1h-1zM340 139h1v1h-1zM343 139h1v1h-1zM346 139h1v1h-1zM349 139h1v1h-1zM352 139h1v1h-1zM355 139h1v1h-1zM358 139h1v1h-1zM361 139h1v1h-1zM364 139h1v1h-1zM367 139h1v1h-1zM370 139h1v1h-1zM373 139h1v1h-1zM376 139h1v1h-1zM379 139h1v1h-1zM382 139h1v1h-1zM385 139h1v1h-1zM388 139h1v1h-1zM391 139h1v1h-1zM394 139h1v1h-1zM397 139h1v1h-1zM400 139h1v1h-1zM403 139h1v1h-1zM406 139h1v1h-1zM409 139h1v1h-1zM412 139h1v1h-1zM415 139h1v1h-1zM418 139h1v1h-1zM421 139h1v1h-1zM424 139h1v1h-1zM427 139h1v1h-1zM430 139h1v1h-1zM433 139h1v1h-1zM436 139h1v1h-1zM439 139h1v1h-1zM442 139h1v1h-1zM445 139h1v1h-1zM448 139h1v1h-1zM451 139h1v1h-1zM454 139h1v1h-1zM457 139h1v1h-1zM460 139h1v1h-1zM463 139h1v1h-1zM466 139h1v1h-1zM469 139h1v1h-1zM472 139h1v1h-1zM475 139h1v1h-1zM478 139h1v1h-1zM481 139h1v1h-1zM484 139h1v1h-1zM487 139h1v1h-1zM490 139h1v1h-1zM493 139h1v1h-1zM496 139h1v1h-1zM499 139h1v1h-1zM502 139h1v1h-1zM505 139h1v1h-1zM508 139h1v1h-1zM511 139h1v1h-1zM514 139h1v1h-1zM517 139h1v1h-1zM520 139h1v1h-1zM523 139h1v1h-1zM526 139h1v1h-1zM529 139h1v1h-1zM532 139h1v1h-1zM535 139h1v1h-1zM538 139h1v1h-1zM541 139h1v1h-1zM544 139h1v1h-1zM547 139h1v1h-1zM550 139h1v1h-1zM553 139h1v1h-1zM556 139h1v1h-1zM559 139h1v1h-1zM562 139h1v1h-1zM565 139h1v1h-1zM568 139h1v1h-1zM571 139h1v1h-1zM574 139h1v1h-1zM577 139h1v1h-1zM580 139h1v1h-1zM583 139h1v1h-1zM586 139h1v1h-1zM589 139h1v1h-1zM592 139h1v1h-1zM595 139h1v1h-1zM598 139h1v1h-1zM601 139h1v1h-1zM604 139h1v1h-1zM607 139h1v1h-1zM610 139h1v1h-1zM613 139h1v1h-1zM616 139h1v1h-1zM619 139h1v1h-1zM622 139h1v1h-1zM625 139h1v1h-1zM628 139h1v1h-1zM631 139h1v1h-1zM634 139h1v1h-1zM637 139h1v1h-1zM640 139h1v1h-1zM643 139h1v1h-1zM646 139h1v1h-1zM649 139h1v1h-1zM652 139h1v1h-1zM655 139h1v1h-1zM658 139h1v1h-1zM661 139h1v1h-1zM664 139h1v1h-1zM667 139h1v1h-1zM670 139h1v1h-1zM673 139h1v1h-1zM676 139h1v1h-1zM679 139h1v1h-1zM682 139h1v1h-1zM685 139h1v1h-1zM688 139h1v1h-1zM691 139h1v1h-1zM694 139h1v1h-1zM697 139h1v1h-1zM700 139h1v1h-1zM703 139h1v1h-1zM706 139h1v1h-1zM709 139h1v1h-1zM712 139h1v1h-1zM715 139h1v1h-1zM718 139h1v1h-1zM721 139h1v1h-1zM724 139h1v1h-1zM727 139h1v1h-1zM730 139h1v1h-1zM733 139h1v1h-1zM736 139h1v1h-1zM739 139h1v1h-1zM742 139h1v1h-1zM745 139h1v1h-1zM748 139h1v1h-1zM751 139h1v1h-1zM754 139h1v1h-1zM757 139h1v1h-1zM760 139h1v1h-1zM763 139h1v1h-1zM766 139h1v1h-1zM769 139h1v1h-1zM772 139h1v1h-1zM775 139h1v1h-1zM778 139h1v1h-1zM781 139h1v1h-1zM784 139h1v1h-1zM787 139h1v1h-1zM790 139h1v1h-1zM793 139h1v1h-1zM796 139h1v1h-1zM799 139h1v1h-1zM802 139h1v1h-1zM805 139h1v1h-1zM808 139h1v1h-1zM811 139h1v1h-1zM814 139h1v1h-1zM817 139h1v1h-1zM820 139h1v1h-1zM823 139h1v1h-1zM826 139h1v1h-1zM829 139h1v1h-1zM832 139h1v1h-1zM835 139h1v1h-1zM838 139h1v1h-1zM841 139h1v1h-1zM844 139h1v1h-1zM847 139h1v1h-1zM850 139h1v1h-1zM853 139h1v1h-1zM856 139h1v1h-1zM859 139h1v1h-1zM862 139h1v1h-1zM865 139h1v1h-1zM868 139h1v1h-1zM871 139h1v1h-1zM874 139h1v1h-1zM877 139h1v1h-1zM880 139h1v1h-1zM883 139h1v1h-1zM886 139h1v1h-1zM889 139h1v1h-1zM892 139h1v1h-1zM895 139h1v1h-1zM898 139h1v1h-1zM901 139h1v1h-1zM904 139h1v1h-1zM907 139h1v1h-1zM910 139h1v1h-1zM913 139h1v1h-1zM916 139h1v1h-1zM919 139h1v1h-1zM922 139h1v1h-1zM925 139h1v1h-1zM928 139h1v1h-1zM931 139h1v1h-1zM934 139h1v1h-1zM937 139h1v1h-1zM940 139h1v1h-1zM943 139h1v1h-1zM946 139h1v1h-1zM949 139h1v1h-1zM952 139h1v1h-1zM955 139h1v1h-1zM958 139h1v1h-1zM961 139h1v1h-1zM964 139h1v1h-1zM967 139h1v1h-1zM970 139h1v1h-1zM973 139h1v1h-1zM976 139h1v1h-1zM979 139h1v1h-1zM982 139h1v1h-1zM985 139h1v1h-1zM988 139h1v1h-1zM991 139h1v1h-1zM994 139h1v1h-1zM997 139h1v1h-1zM1000 139h1v1h-1zM1003 139h1v1h-1zM1006 139h1v1h-1zM1009 139h1v1h-1zM1012 139h1v1h-1zM1015 139h1v1h-1zM1018 139h1v1h-1zM19 184h1v1h-1zM22 184h1v1h-1zM25 184h1v1h-1zM28 184h1v1h-1zM31 184h1v1h-1zM34 184h1v1h-1zM37 184h1v1h-1zM40 184h1v1h-1zM43 184h1v1h-1zM46 184h1v1h-1zM49 184h1v1h-1zM52 184h1v1h-1zM55 184h1v1h-1zM58 184h1v1h-1zM61 184h1v1h-1zM64 184h1v1h-1zM67 184h1v1h-1zM70 184h1v1h-1zM73 184h1v1h-1zM76 184h1v1h-1zM79 184h1v1h-1zM82 184h1v1h-1zM85 184h1v1h-1zM88 184h1v1h-1zM91 184h1v1h-1zM94 184h1v1h-1zM97 184h1v1h-1zM100 184h1v1h-1zM103 184h1v1h-1zM106 184h1v1h-1zM109 184h1v1h-1zM112 184h1v1h-1zM115 184h1v1h-1zM118 184h1v1h-1zM121 184h1v1h-1zM124 184h1v1h-1zM127 184h1v1h-1zM130 184h1v1h-1zM133 184h1v1h-1zM136 184h1v1h-1zM139 184h1v1h-1zM142 184h1v1h-1zM145 184h1v1h-1zM148 184h1v1h-1zM151 184h1v1h-1zM154 184h1v1h-1zM157 184h1v1h-1zM160 184h1v1h-1zM163 184h1v1h-1zM166 184h1v1h-1zM169 184h1v1h-1zM172 184h1v1h-1zM175 184h1v1h-1zM178 184h1v1h-1zM181 184h1v1h-1zM184 184h1v1h-1zM187 184h1v1h-1zM190 184h1v1h-1zM193 184h1v1h-1zM196 184h1v1h-1zM199 184h1v1h-1zM202 184h1v1h-1zM205 184h1v1h-1zM208 184h1v1h-1zM211 184h1v1h-1zM214 184h1v1h-1zM217 184h1v1h-1zM220 184h1v1h-1zM223 184h1v1h-1zM226 184h1v1h-1zM229 184h1v1h-1zM232 184h1v1h-1zM235 184h1v1h-1zM238 184h1v1h-1zM241 184h1v1h-1zM244 184h1v1h-1zM247 184h1v1h-1zM250 184h1v1h-1zM253 184h1v1h-1zM256 184h1v1h-1zM259 184h1v1h-1zM262 184h1v1h-1zM265 184h1v1h-1zM268 184h1v1h-1zM271 184h1v1h-1zM274 184h1v1h-1zM277 184h1v1h-1zM280 184h1v1h-1zM283 184h1v1h-1zM286 184h1v1h-1zM289 184h1v1h-1zM292 184h1v1h-1zM295 184h1v1h-1zM298 184h1v1h-1zM301 184h1v1h-1zM304 184h1v1h-1zM307 184h1v1h-1zM310 184h1v1h-1zM313 184h1v1h-1zM316 184h1v1h-1zM319 184h1v1h-1zM322 184h1v1h-1zM325 184h1v1h-1zM328 184h1v1h-1zM331 184h1v1h-1zM334 184h1v1h-1zM337 184h1v1h-1zM340 184h1v1h-1zM343 184h1v1h-1zM346 184h1v1h-1zM349 184h1v1h-1zM352 184h1v1h-1zM355 184h1v1h-1zM358 184h1v1h-1zM361 184h1v1h-1zM364 184h1v1h-1zM367 184h1v1h-1zM370 184h1v1h-1zM373 184h1v1h-1zM376 184h1v1h-1zM379 184h1v1h-1zM382 184h1v1h-1zM385 184h1v1h-1zM388 184h1v1h-1zM391 184h1v1h-1zM394 184h1v1h-1zM397 184h1v1h-1zM400 184h1v1h-1zM403 184h1v1h-1zM406 184h1v1h-1zM409 184h1v1h-1zM412 184h1v1h-1zM415 184h1v1h-1zM418 184h1v1h-1zM421 184h1v1h-1zM424 184h1v1h-1zM427 184h1v1h-1zM430 184h1v1h-1zM433 184h1v1h-1zM436 184h1v1h-1zM439 184h1v1h-1zM442 184h1v1h-1zM445 184h1v1h-1zM448 184h1v1h-1zM451 184h1v1h-1zM454 184h1v1h-1zM457 184h1v1h-1zM460 184h1v1h-1zM463 184h1v1h-1zM466 184h1v1h-1zM469 184h1v1h-1zM472 184h1v1h-1zM475 184h1v1h-1zM478 184h1v1h-1zM481 184h1v1h-1zM484 184h1v1h-1zM487 184h1v1h-1zM490 184h1v1h-1zM493 184h1v1h-1zM496 184h1v1h-1zM499 184h1v1h-1zM502 184h1v1h-1zM505 184h1v1h-1zM508 184h1v1h-1zM511 184h1v1h-1zM514 184h1v1h-1zM517 184h1v1h-1zM520 184h1v1h-1zM523 184h1v1h-1zM526 184h1v1h-1zM529 184h1v1h-1zM532 184h1v1h-1zM535 184h1v1h-1zM538 184h1v1h-1zM541 184h1v1h-1zM544 184h1v1h-1zM547 184h1v1h-1zM550 184h1v1h-1zM553 184h1v1h-1zM556 184h1v1h-1zM559 184h1v1h-1zM562 184h1v1h-1zM565 184h1v1h-1zM568 184h1v1h-1zM571 184h1v1h-1zM574 184h1v1h-1zM577 184h1v1h-1zM580 184h1v1h-1zM583 184h1v1h-1zM586 184h1v1h-1zM589 184h1v1h-1zM592 184h1v1h-1zM595 184h1v1h-1zM598 184h1v1h-1zM601 184h1v1h-1zM604 184h1v1h-1zM607 184h1v1h-1zM610 184h1v1h-1zM613 184h1v1h-1zM616 184h1v1h-1zM619 184h1v1h-1zM622 184h1v1h-1zM625 184h1v1h-1zM628 184h1v1h-1zM631 184h1v1h-1zM634 184h1v1h-1zM637 184h1v1h-1zM640 184h1v1h-1zM643 184h1v1h-1zM646 184h1v1h-1zM649 184h1v1h-1zM652 184h1v1h-1zM655 184h1v1h-1zM658 184h1v1h-1zM661 184h1v1h-1zM664 184h1v1h-1zM667 184h1v1h-1zM670 184h1v1h-1zM673 184h1v1h-1zM676 184h1v1h-1zM679 184h1v1h-1zM682 184h1v1h-1zM685 184h1v1h-1zM688 184h1v1h-1zM691 184h1v1h-1zM694 184h1v1h-1zM697 184h1v1h-1zM700 184h1v1h-1zM703 184h1v1h-1zM706 184h1v1h-1zM709 184h1v1h-1zM712 184h1v1h-1zM715 184h1v1h-1zM718 184h1v1h-1zM721 184h1v1h-1zM724 184h1v1h-1zM727 184h1v1h-1zM730 184h1v1h-1zM733 184h1v1h-1zM736 184h1v1h-1zM739 184h1v1h-1zM742 184h1v1h-1zM745 184h1v1h-1zM748 184h1v1h-1zM751 184h1v1h-1zM754 184h1v1h-1zM757 184h1v1h-1zM760 184h1v1h-1zM763 184h1v1h-1zM766 184h1v1h-1zM769 184h1v1h-1zM772 184h1v1h-1zM775 184h1v1h-1zM778 184h1v1h-1zM781 184h1v1h-1zM784 184h1v1h-1zM787 184h1v1h-1zM790 184h1v1h-1zM793 184h1v1h-1zM796 184h1v1h-1zM799 184h1v1h-1zM802 184h1v1h-1zM805 184h1v1h-1zM808 184h1v1h-1zM811 184h1v1h-1zM814 184h1v1h-1zM817 184h1v1h-1zM820 184h1v1h-1zM823 184h1v1h-1zM826 184h1v1h-1zM829 184h1v1h-1zM832 184h1v1h-1zM835 184h1v1h-1zM838 184h1v1h-1zM841 184h1v1h-1zM844 184h1v1h-1zM847 184h1v1h-1zM850 184h1v1h-1zM853 184h1v1h-1zM856 184h1v1h-1zM859 184h1v1h-1zM862 184h1v1h-1zM865 184h1v1h-1zM868 184h1v1h-1zM871 184h1v1h-1zM874 184h1v1h-1zM877 184h1v1h-1zM880 184h1v1h-1zM883 184h1v1h-1zM886 184h1v1h-1zM889 184h1v1h-1zM892 184h1v1h-1zM895 184h1v1h-1zM898 184h1v1h-1zM901 184h1v1h-1zM904 184h1v1h-1zM907 184h1v1h-1zM910 184h1v1h-1zM913 184h1v1h-1zM916 184h1v1h-1zM919 184h1v1h-1zM922 184h1v1h-1zM925 184h1v1h-1zM928 184h1v1h-1zM931 184h1v1h-1zM934 184h1v1h-1zM937 184h1v1h-1zM940 184h1v1h-1zM943 184h1v1h-1zM946 184h1v1h-1zM949 184h1v1h-1zM952 184h1v1h-1zM955 184h1v1h-1zM958 184h1v1h-1zM961 184h1v1h-1zM964 184h1v1h-1zM967 184h1v1h-1zM970 184h1v1h-1zM973 184h1v1h-1zM976 184h1v1h-1zM979 184h1v1h-1zM982 184h1v1h-1zM985 184h1v1h-1zM988 184h1v1h-1zM991 184h1v1h-1zM994 184h1v1h-1zM997 184h1v1h-1zM1000 184h1v1h-1zM1003 184h1v1h-1zM1006 184h1v1h-1zM1009 184h1v1h-1zM1012 184h1v1h-1zM1015 184h1v1h-1zM1018 184h1v1h-1zM19 274h1v1h-1zM22 274h1v1h-1zM25 274h1v1h-1zM28 274h1v1h-1zM31 274h1v1h-1zM34 274h1v1h-1zM37 274h1v1h-1zM40 274h1v1h-1zM43 274h1v1h-1zM46 274h1v1h-1zM49 274h1v1h-1zM52 274h1v1h-1zM55 274h1v1h-1zM58 274h1v1h-1zM61 274h1v1h-1zM64 274h1v1h-1zM67 274h1v1h-1zM70 274h1v1h-1zM73 274h1v1h-1zM76 274h1v1h-1zM79 274h1v1h-1zM82 274h1v1h-1zM85 274h1v1h-1zM88 274h1v1h-1zM91 274h1v1h-1zM94 274h1v1h-1zM97 274h1v1h-1zM100 274h1v1h-1zM103 274h1v1h-1zM106 274h1v1h-1zM109 274h1v1h-1zM112 274h1v1h-1zM115 274h1v1h-1zM118 274h1v1h-1zM121 274h1v1h-1zM124 274h1v1h-1zM127 274h1v1h-1zM130 274h1v1h-1zM133 274h1v1h-1zM136 274h1v1h-1zM139 274h1v1h-1zM142 274h1v1h-1zM145 274h1v1h-1zM148 274h1v1h-1zM151 274h1v1h-1zM154 274h1v1h-1zM157 274h1v1h-1zM160 274h1v1h-1zM163 274h1v1h-1zM166 274h1v1h-1zM169 274h1v1h-1zM172 274h1v1h-1zM175 274h1v1h-1zM178 274h1v1h-1zM181 274h1v1h-1zM184 274h1v1h-1zM187 274h1v1h-1zM190 274h1v1h-1zM193 274h1v1h-1zM196 274h1v1h-1zM199 274h1v1h-1zM202 274h1v1h-1zM205 274h1v1h-1zM208 274h1v1h-1zM211 274h1v1h-1zM214 274h1v1h-1zM217 274h1v1h-1zM220 274h1v1h-1zM223 274h1v1h-1zM226 274h1v1h-1zM229 274h1v1h-1zM232 274h1v1h-1zM235 274h1v1h-1zM238 274h1v1h-1zM241 274h1v1h-1zM244 274h1v1h-1zM247 274h1v1h-1zM250 274h1v1h-1zM253 274h1v1h-1zM256 274h1v1h-1zM259 274h1v1h-1zM262 274h1v1h-1zM265 274h1v1h-1zM268 274h1v1h-1zM271 274h1v1h-1zM274 274h1v1h-1zM277 274h1v1h-1zM280 274h1v1h-1zM283 274h1v1h-1zM286 274h1v1h-1zM289 274h1v1h-1zM292 274h1v1h-1zM295 274h1v1h-1zM298 274h1v1h-1zM301 274h1v1h-1zM304 274h1v1h-1zM307 274h1v1h-1zM310 274h1v1h-1zM313 274h1v1h-1zM316 274h1v1h-1zM319 274h1v1h-1zM322 274h1v1h-1zM325 274h1v1h-1zM328 274h1v1h-1zM331 274h1v1h-1zM334 274h1v1h-1zM337 274h1v1h-1zM340 274h1v1h-1zM343 274h1v1h-1zM346 274h1v1h-1zM349 274h1v1h-1zM352 274h1v1h-1zM355 274h1v1h-1zM358 274h1v1h-1zM361 274h1v1h-1zM364 274h1v1h-1zM367 274h1v1h-1zM370 274h1v1h-1zM373 274h1v1h-1zM376 274h1v1h-1zM379 274h1v1h-1zM382 274h1v1h-1zM385 274h1v1h-1zM388 274h1v1h-1zM391 274h1v1h-1zM394 274h1v1h-1zM397 274h1v1h-1zM400 274h1v1h-1zM403 274h1v1h-1zM406 274h1v1h-1zM409 274h1v1h-1zM412 274h1v1h-1zM415 274h1v1h-1zM418 274h1v1h-1zM421 274h1v1h-1zM424 274h1v1h-1zM427 274h1v1h-1zM430 274h1v1h-1zM433 274h1v1h-1zM436 274h1v1h-1zM439 274h1v1h-1zM442 274h1v1h-1zM445 274h1v1h-1zM448 274h1v1h-1zM451 274h1v1h-1zM454 274h1v1h-1zM457 274h1v1h-1zM460 274h1v1h-1zM463 274h1v1h-1zM466 274h1v1h-1zM469 274h1v1h-1zM472 274h1v1h-1zM475 274h1v1h-1zM478 274h1v1h-1zM481 274h1v1h-1zM484 274h1v1h-1zM487 274h1v1h-1zM490 274h1v1h-1zM493 274h1v1h-1zM496 274h1v1h-1zM499 274h1v1h-1zM502 274h1v1h-1zM505 274h1v1h-1zM508 274h1v1h-1zM511 274h1v1h-1zM514 274h1v1h-1zM517 274h1v1h-1zM520 274h1v1h-1zM523 274h1v1h-1zM526 274h1v1h-1zM529 274h1v1h-1zM532 274h1v1h-1zM535 274h1v1h-1zM538 274h1v1h-1zM541 274h1v1h-1zM544 274h1v1h-1zM547 274h1v1h-1zM550 274h1v1h-1zM553 274h1v1h-1zM556 274h1v1h-1zM559 274h1v1h-1zM562 274h1v1h-1zM565 274h1v1h-1zM568 274h1v1h-1zM571 274h1v1h-1zM574 274h1v1h-1zM577 274h1v1h-1zM580 274h1v1h-1zM583 274h1v1h-1zM586 274h1v1h-1zM589 274h1v1h-1zM592 274h1v1h-1zM595 274h1v1h-1zM598 274h1v1h-1zM601 274h1v1h-1zM604 274h1v1h-1zM607 274h1v1h-1zM610 274h1v1h-1zM613 274h1v1h-1zM616 274h1v1h-1zM619 274h1v1h-1zM622 274h1v1h-1zM625 274h1v1h-1zM628 274h1v1h-1zM631 274h1v1h-1zM634 274h1v1h-1zM637 274h1v1h-1zM640 274h1v1h-1zM643 274h1v1h-1zM646 274h1v1h-1zM649 274h1v1h-1zM652 274h1v1h-1zM655 274h1v1h-1zM658 274h1v1h-1zM661 274h1v1h-1zM664 274h1v1h-1zM667 274h1v1h-1zM670 274h1v1h-1zM673 274h1v1h-1zM676 274h1v1h-1zM679 274h1v1h-1zM682 274h1v1h-1zM685 274h1v1h-1zM688 274h1v1h-1zM691 274h1v1h-1zM694 274h1v1h-1zM697 274h1v1h-1zM700 274h1v1h-1zM703 274h1v1h-1zM706 274h1v1h-1zM709 274h1v1h-1zM712 274h1v1h-1zM715 274h1v1h-1zM718 274h1v1h-1zM721 274h1v1h-1zM724 274h1v1h-1zM727 274h1v1h-1zM730 274h1v1h-1zM733 274h1v1h-1zM736 274h1v1h-1zM739 274h1v1h-1zM742 274h1v1h-1zM745 274h1v1h-1zM748 274h1v1h-1zM751 274h1v1h-1zM754 274h1v1h-1zM757 274h1v1h-1zM760 274h1v1h-1zM763 274h1v1h-1zM766 274h1v1h-1zM769 274h1v1h-1zM772 274h1v1h-1zM775 274h1v1h-1zM778 274h1v1h-1zM781 274h1v1h-1zM784 274h1v1h-1zM787 274h1v1h-1zM790 274h1v1h-1zM793 274h1v1h-1zM796 274h1v1h-1zM799 274h1v1h-1zM802 274h1v1h-1zM805 274h1v1h-1zM808 274h1v1h-1zM811 274h1v1h-1zM814 274h1v1h-1zM817 274h1v1h-1zM820 274h1v1h-1zM823 274h1v1h-1zM826 274h1v1h-1zM829 274h1v1h-1zM832 274h1v1h-1zM835 274h1v1h-1zM838 274h1v1h-1zM841 274h1v1h-1zM844 274h1v1h-1zM847 274h1v1h-1zM850 274h1v1h-1zM853 274h1v1h-1zM856 274h1v1h-1zM859 274h1v1h-1zM862 274h1v1h-1zM865 274h1v1h-1zM868 274h1v1h-1zM871 274h1v1h-1zM874 274h1v1h-1zM877 274h1v1h-1zM880 274h1v1h-1zM883 274h1v1h-1zM886 274h1v1h-1zM889 274h1v1h-1zM892 274h1v1h-1zM895 274h1v1h-1zM898 274h1v1h-1zM901 274h1v1h-1zM904 274h1v1h-1zM907 274h1v1h-1zM910 274h1v1h-1zM913 274h1v1h-1zM916 274h1v1h-1zM919 274h1v1h-1zM922 274h1v1h-1zM925 274h1v1h-1zM928 274h1v1h-1zM931 274h1v1h-1zM934 274h1v1h-1zM937 274h1v1h-1zM940 274h1v1h-1zM943 274h1v1h-1zM946 274h1v1h-1zM949 274h1v1h-1zM952 274h1v1h-1zM955 274h1v1h-1zM958 274h1v1h-1zM961 274h1v1h-1zM964 274h1v1h-1zM967 274h1v1h-1zM970 274h1v1h-1zM973 274h1v1h-1zM976 274h1v1h-1zM979 274h1v1h-1zM982 274h1v1h-1zM985 274h1v1h-1zM988 274h1v1h-1zM991 274h1v1h-1zM994 274h1v1h-1zM997 274h1v1h-1zM1000 274h1v1h-1zM1003 274h1v1h-1zM1006 274h1v1h-1zM1009 274h1v1h-1zM1012 274h1v1h-1zM1015 274h1v1h-1zM1018 274h1v1h-1zM19 319h1v1h-1zM22 319h1v1h-1zM25 319h1v1h-1zM28 319h1v1h-1zM31 319h1v1h-1zM34 319h1v1h-1zM37 319h1v1h-1zM40 319h1v1h-1zM43 319h1v1h-1zM46 319h1v1h-1zM49 319h1v1h-1zM52 319h1v1h-1zM55 319h1v1h-1zM58 319h1v1h-1zM61 319h1v1h-1zM64 319h1v1h-1zM67 319h1v1h-1zM70 319h1v1h-1zM73 319h1v1h-1zM76 319h1v1h-1zM79 319h1v1h-1zM82 319h1v1h-1zM85 319h1v1h-1zM88 319h1v1h-1zM91 319h1v1h-1zM94 319h1v1h-1zM97 319h1v1h-1zM100 319h1v1h-1zM103 319h1v1h-1zM106 319h1v1h-1zM109 319h1v1h-1zM112 319h1v1h-1zM115 319h1v1h-1zM118 319h1v1h-1zM121 319h1v1h-1zM124 319h1v1h-1zM127 319h1v1h-1zM130 319h1v1h-1zM133 319h1v1h-1zM136 319h1v1h-1zM139 319h1v1h-1zM142 319h1v1h-1zM145 319h1v1h-1zM148 319h1v1h-1zM151 319h1v1h-1zM154 319h1v1h-1zM157 319h1v1h-1zM160 319h1v1h-1zM163 319h1v1h-1zM166 319h1v1h-1zM169 319h1v1h-1zM172 319h1v1h-1zM175 319h1v1h-1zM178 319h1v1h-1zM181 319h1v1h-1zM184 319h1v1h-1zM187 319h1v1h-1zM190 319h1v1h-1zM193 319h1v1h-1zM196 319h1v1h-1zM199 319h1v1h-1zM202 319h1v1h-1zM205 319h1v1h-1zM208 319h1v1h-1zM211 319h1v1h-1zM214 319h1v1h-1zM217 319h1v1h-1zM220 319h1v1h-1zM223 319h1v1h-1zM226 319h1v1h-1zM229 319h1v1h-1zM232 319h1v1h-1zM235 319h1v1h-1zM238 319h1v1h-1zM241 319h1v1h-1zM244 319h1v1h-1zM247 319h1v1h-1zM250 319h1v1h-1zM253 319h1v1h-1zM256 319h1v1h-1zM259 319h1v1h-1zM262 319h1v1h-1zM265 319h1v1h-1zM268 319h1v1h-1zM271 319h1v1h-1zM274 319h1v1h-1zM277 319h1v1h-1zM280 319h1v1h-1zM283 319h1v1h-1zM286 319h1v1h-1zM289 319h1v1h-1zM292 319h1v1h-1zM295 319h1v1h-1zM298 319h1v1h-1zM301 319h1v1h-1zM304 319h1v1h-1zM307 319h1v1h-1zM310 319h1v1h-1zM313 319h1v1h-1zM316 319h1v1h-1zM319 319h1v1h-1zM322 319h1v1h-1zM325 319h1v1h-1zM328 319h1v1h-1zM331 319h1v1h-1zM334 319h1v1h-1zM337 319h1v1h-1zM340 319h1v1h-1zM343 319h1v1h-1zM346 319h1v1h-1zM349 319h1v1h-1zM352 319h1v1h-1zM355 319h1v1h-1zM358 319h1v1h-1zM361 319h1v1h-1zM364 319h1v1h-1zM367 319h1v1h-1zM370 319h1v1h-1zM373 319h1v1h-1zM376 319h1v1h-1zM379 319h1v1h-1zM382 319h1v1h-1zM385 319h1v1h-1zM388 319h1v1h-1zM391 319h1v1h-1zM394 319h1v1h-1zM397 319h1v1h-1zM400 319h1v1h-1zM403 319h1v1h-1zM406 319h1v1h-1zM409 319h1v1h-1zM412 319h1v1h-1zM415 319h1v1h-1zM418 319h1v1h-1zM421 319h1v1h-1zM424 319h1v1h-1zM427 319h1v1h-1zM430 319h1v1h-1zM433 319h1v1h-1zM436 319h1v1h-1zM439 319h1v1h-1zM442 319h1v1h-1zM445 319h1v1h-1zM448 319h1v1h-1zM451 319h1v1h-1zM454 319h1v1h-1zM457 319h1v1h-1zM460 319h1v1h-1zM463 319h1v1h-1zM466 319h1v1h-1zM469 319h1v1h-1zM472 319h1v1h-1zM475 319h1v1h-1zM478 319h1v1h-1zM481 319h1v1h-1zM484 319h1v1h-1zM487 319h1v1h-1zM490 319h1v1h-1zM493 319h1v1h-1zM496 319h1v1h-1zM499 319h1v1h-1zM502 319h1v1h-1zM505 319h1v1h-1zM508 319h1v1h-1zM511 319h1v1h-1zM514 319h1v1h-1zM517 319h1v1h-1zM520 319h1v1h-1zM523 319h1v1h-1zM526 319h1v1h-1zM529 319h1v1h-1zM532 319h1v1h-1zM535 319h1v1h-1zM538 319h1v1h-1zM541 319h1v1h-1zM544 319h1v1h-1zM547 319h1v1h-1zM550 319h1v1h-1zM553 319h1v1h-1zM556 319h1v1h-1zM559 319h1v1h-1zM562 319h1v1h-1zM565 319h1v1h-1zM568 319h1v1h-1zM571 319h1v1h-1zM574 319h1v1h-1zM577 319h1v1h-1zM580 319h1v1h-1zM583 319h1v1h-1zM586 319h1v1h-1zM589 319h1v1h-1zM592 319h1v1h-1zM595 319h1v1h-1zM598 319h1v1h-1zM601 319h1v1h-1zM604 319h1v1h-1zM607 319h1v1h-1zM610 319h1v1h-1zM613 319h1v1h-1zM616 319h1v1h-1zM619 319h1v1h-1zM622 319h1v1h-1zM625 319h1v1h-1zM628 319h1v1h-1zM631 319h1v1h-1zM634 319h1v1h-1zM637 319h1v1h-1zM640 319h1v1h-1zM643 319h1v1h-1zM646 319h1v1h-1zM649 319h1v1h-1zM652 319h1v1h-1zM655 319h1v1h-1zM658 319h1v1h-1zM661 319h1v1h-1zM664 319h1v1h-1zM667 319h1v1h-1zM670 319h1v1h-1zM673 319h1v1h-1zM676 319h1v1h-1zM679 319h1v1h-1zM682 319h1v1h-1zM685 319h1v1h-1zM688 319h1v1h-1zM691 319h1v1h-1zM694 319h1v1h-1zM697 319h1v1h-1zM700 319h1v1h-1zM703 319h1v1h-1zM706 319h1v1h-1zM709 319h1v1h-1zM712 319h1v1h-1zM715 319h1v1h-1zM718 319h1v1h-1zM721 319h1v1h-1zM724 319h1v1h-1zM727 319h1v1h-1zM730 319h1v1h-1zM733 319h1v1h-1zM736 319h1v1h-1zM739 319h1v1h-1zM742 319h1v1h-1zM745 319h1v1h-1zM748 319h1v1h-1zM751 319h1v1h-1zM754 319h1v1h-1zM757 319h1v1h-1zM760 319h1v1h-1zM763 319h1v1h-1zM766 319h1v1h-1zM769 319h1v1h-1zM772 319h1v1h-1zM775 319h1v1h-1zM778 319h1v1h-1zM781 319h1v1h-1zM784 319h1v1h-1zM787 319h1v1h-1zM790 319h1v1h-1zM793 319h1v1h-1zM796 319h1v1h-1zM799 319h1v1h-1zM802 319h1v1h-1zM805 319h1v1h-1zM808 319h1v1h-1zM811 319h1v1h-1zM814 319h1v1h-1zM817 319h1v1h-1zM820 319h1v1h-1zM823 319h1v1h-1zM826 319h1v1h-1zM829 319h1v1h-1zM832 319h1v1h-1zM835 319h1v1h-1zM838 319h1v1h-1zM841 319h1v1h-1zM844 319h1v1h-1zM847 319h1v1h-1zM850 319h1v1h-1zM853 319h1v1h-1zM856 319h1v1h-1zM859 319h1v1h-1zM862 319h1v1h-1zM865 319h1v1h-1zM868 319h1v1h-1zM871 319h1v1h-1zM874 319h1v1h-1zM877 319h1v1h-1zM880 319h1v1h-1zM883 319h1v1h-1zM886 319h1v1h-1zM889 319h1v1h-1zM892 319h1v1h-1zM895 319h1v1h-1zM898 319h1v1h-1zM901 319h1v1h-1zM904 319h1v1h-1zM907 319h1v1h-1zM910 319h1v1h-1zM913 319h1v1h-1zM916 319h1v1h-1zM919 319h1v1h-1zM922 319h1v1h-1zM925 319h1v1h-1zM928 319h1v1h-1zM931 319h1v1h-1zM934 319h1v1h-1zM937 319h1v1h-1zM940 319h1v1h-1zM943 319h1v1h-1zM946 319h1v1h-1zM949 319h1v1h-1zM952 319h1v1h-1zM955 319h1v1h-1zM958 319h1v1h-1zM961 319h1v1h-1zM964 319h1v1h-1zM967 319h1v1h-1zM970 319h1v1h-1zM973 319h1v1h-1zM976 319h1v1h-1zM979 319h1v1h-1zM982 319h1v1h-1zM985 319h1v1h-1zM988 319h1v1h-1zM991 319h1v1h-1zM994 319h1v1h-1zM997 319h1v1h-1zM1000 319h1v1h-1zM1003 319h1v1h-1zM1006 319h1v1h-1zM1009 319h1v1h-1zM1012 319h1v1h-1zM1015 319h1v1h-1zM1018 319h1v1h-1zM19 364h1v1h-1zM22 364h1v1h-1zM25 364h1v1h-1zM28 364h1v1h-1zM31 364h1v1h-1zM34 364h1v1h-1zM37 364h1v1h-1zM40 364h1v1h-1zM43 364h1v1h-1zM46 364h1v1h-1zM49 364h1v1h-1zM52 364h1v1h-1zM55 364h1v1h-1zM58 364h1v1h-1zM61 364h1v1h-1zM64 364h1v1h-1zM67 364h1v1h-1zM70 364h1v1h-1zM73 364h1v1h-1zM76 364h1v1h-1zM79 364h1v1h-1zM82 364h1v1h-1zM85 364h1v1h-1zM88 364h1v1h-1zM91 364h1v1h-1zM94 364h1v1h-1zM97 364h1v1h-1zM100 364h1v1h-1zM103 364h1v1h-1zM106 364h1v1h-1zM109 364h1v1h-1zM112 364h1v1h-1zM115 364h1v1h-1zM118 364h1v1h-1zM121 364h1v1h-1zM124 364h1v1h-1zM127 364h1v1h-1zM130 364h1v1h-1zM133 364h1v1h-1zM136 364h1v1h-1zM139 364h1v1h-1zM142 364h1v1h-1zM145 364h1v1h-1zM148 364h1v1h-1zM151 364h1v1h-1zM154 364h1v1h-1zM157 364h1v1h-1zM160 364h1v1h-1zM163 364h1v1h-1zM166 364h1v1h-1zM169 364h1v1h-1zM172 364h1v1h-1zM175 364h1v1h-1zM178 364h1v1h-1zM181 364h1v1h-1zM184 364h1v1h-1zM187 364h1v1h-1zM190 364h1v1h-1zM193 364h1v1h-1zM196 364h1v1h-1zM199 364h1v1h-1zM202 364h1v1h-1zM205 364h1v1h-1zM208 364h1v1h-1zM211 364h1v1h-1zM214 364h1v1h-1zM217 364h1v1h-1zM220 364h1v1h-1zM223 364h1v1h-1zM226 364h1v1h-1zM229 364h1v1h-1zM232 364h1v1h-1zM235 364h1v1h-1zM238 364h1v1h-1zM241 364h1v1h-1zM244 364h1v1h-1zM247 364h1v1h-1zM250 364h1v1h-1zM253 364h1v1h-1zM256 364h1v1h-1zM259 364h1v1h-1zM262 364h1v1h-1zM265 364h1v1h-1zM268 364h1v1h-1zM271 364h1v1h-1zM274 364h1v1h-1zM277 364h1v1h-1zM280 364h1v1h-1zM283 364h1v1h-1zM286 364h1v1h-1zM289 364h1v1h-1zM292 364h1v1h-1zM295 364h1v1h-1zM298 364h1v1h-1zM301 364h1v1h-1zM304 364h1v1h-1zM307 364h1v1h-1zM310 364h1v1h-1zM313 364h1v1h-1zM316 364h1v1h-1zM319 364h1v1h-1zM322 364h1v1h-1zM325 364h1v1h-1zM328 364h1v1h-1zM331 364h1v1h-1zM334 364h1v1h-1zM337 364h1v1h-1zM340 364h1v1h-1zM343 364h1v1h-1zM346 364h1v1h-1zM349 364h1v1h-1zM352 364h1v1h-1zM355 364h1v1h-1zM358 364h1v1h-1zM361 364h1v1h-1zM364 364h1v1h-1zM367 364h1v1h-1zM370 364h1v1h-1zM373 364h1v1h-1zM376 364h1v1h-1zM379 364h1v1h-1zM382 364h1v1h-1zM385 364h1v1h-1zM388 364h1v1h-1zM391 364h1v1h-1zM394 364h1v1h-1zM397 364h1v1h-1zM400 364h1v1h-1zM403 364h1v1h-1zM406 364h1v1h-1zM409 364h1v1h-1zM412 364h1v1h-1zM415 364h1v1h-1zM418 364h1v1h-1zM421 364h1v1h-1zM424 364h1v1h-1zM427 364h1v1h-1zM430 364h1v1h-1zM433 364h1v1h-1zM436 364h1v1h-1zM439 364h1v1h-1zM442 364h1v1h-1zM445 364h1v1h-1zM448 364h1v1h-1zM451 364h1v1h-1zM454 364h1v1h-1zM457 364h1v1h-1zM460 364h1v1h-1zM463 364h1v1h-1zM466 364h1v1h-1zM469 364h1v1h-1zM472 364h1v1h-1zM475 364h1v1h-1zM478 364h1v1h-1zM481 364h1v1h-1zM484 364h1v1h-1zM487 364h1v1h-1zM490 364h1v1h-1zM493 364h1v1h-1zM496 364h1v1h-1zM499 364h1v1h-1zM502 364h1v1h-1zM505 364h1v1h-1zM508 364h1v1h-1zM511 364h1v1h-1zM514 364h1v1h-1zM517 364h1v1h-1zM520 364h1v1h-1zM523 364h1v1h-1zM526 364h1v1h-1zM529 364h1v1h-1zM532 364h1v1h-1zM535 364h1v1h-1zM538 364h1v1h-1zM541 364h1v1h-1zM544 364h1v1h-1zM547 364h1v1h-1zM550 364h1v1h-1zM553 364h1v1h-1zM556 364h1v1h-1zM559 364h1v1h-1zM562 364h1v1h-1zM565 364h1v1h-1zM568 364h1v1h-1zM571 364h1v1h-1zM574 364h1v1h-1zM577 364h1v1h-1zM580 364h1v1h-1zM583 364h1v1h-1zM586 364h1v1h-1zM589 364h1v1h-1zM592 364h1v1h-1zM595 364h1v1h-1zM598 364h1v1h-1zM601 364h1v1h-1zM604 364h1v1h-1zM607 364h1v1h-1zM610 364h1v1h-1zM613 364h1v1h-1zM616 364h1v1h-1zM619 364h1v1h-1zM622 364h1v1h-1zM625 364h1v1h-1zM628 364h1v1h-1zM631 364h1v1h-1zM634 364h1v1h-1zM637 364h1v1h-1zM640 364h1v1h-1zM643 364h1v1h-1zM646 364h1v1h-1zM649 364h1v1h-1zM652 364h1v1h-1zM655 364h1v1h-1zM658 364h1v1h-1zM661 364h1v1h-1zM664 364h1v1h-1zM667 364h1v1h-1zM670 364h1v1h-1zM673 364h1v1h-1zM676 364h1v1h-1zM679 364h1v1h-1zM682 364h1v1h-1zM685 364h1v1h-1zM688 364h1v1h-1zM691 364h1v1h-1zM694 364h1v1h-1zM697 364h1v1h-1zM700 364h1v1h-1zM703 364h1v1h-1zM706 364h1v1h-1zM709 364h1v1h-1zM712 364h1v1h-1zM715 364h1v1h-1zM718 364h1v1h-1zM721 364h1v1h-1zM724 364h1v1h-1zM727 364h1v1h-1zM730 364h1v1h-1zM733 364h1v1h-1zM736 364h1v1h-1zM739 364h1v1h-1zM742 364h1v1h-1zM745 364h1v1h-1zM748 364h1v1h-1zM751 364h1v1h-1zM754 364h1v1h-1zM757 364h1v1h-1zM760 364h1v1h-1zM763 364h1v1h-1zM766 364h1v1h-1zM769 364h1v1h-1zM772 364h1v1h-1zM775 364h1v1h-1zM778 364h1v1h-1zM781 364h1v1h-1zM784 364h1v1h-1zM787 364h1v1h-1zM790 364h1v1h-1zM793 364h1v1h-1zM796 364h1v1h-1zM799 364h1v1h-1zM802 364h1v1h-1zM805 364h1v1h-1zM808 364h1v1h-1zM811 364h1v1h-1zM814 364h1v1h-1zM817 364h1v1h-1zM820 364h1v1h-1zM823 364h1v1h-1zM826 364h1v1h-1zM829 364h1v1h-1zM832 364h1v1h-1zM835 364h1v1h-1zM838 364h1v1h-1zM841 364h1v1h-1zM844 364h1v1h-1zM847 364h1v1h-1zM850 364h1v1h-1zM853 364h1v1h-1zM856 364h1v1h-1zM859 364h1v1h-1zM862 364h1v1h-1zM865 364h1v1h-1zM868 364h1v1h-1zM871 364h1v1h-1zM874 364h1v1h-1zM877 364h1v1h-1zM880 364h1v1h-1zM883 364h1v1h-1zM886 364h1v1h-1zM889 364h1v1h-1zM892 364h1v1h-1zM895 364h1v1h-1zM898 364h1v1h-1zM901 364h1v1h-1zM904 364h1v1h-1zM907 364h1v1h-1zM910 364h1v1h-1zM913 364h1v1h-1zM916 364h1v1h-1zM919 364h1v1h-1zM922 364h1v1h-1zM925 364h1v1h-1zM928 364h1v1h-1zM931 364h1v1h-1zM934 364h1v1h-1zM937 364h1v1h-1zM940 364h1v1h-1zM943 364h1v1h-1zM946 364h1v1h-1zM949 364h1v1h-1zM952 364h1v1h-1zM955 364h1v1h-1zM958 364h1v1h-1zM961 364h1v1h-1zM964 364h1v1h-1zM967 364h1v1h-1zM970 364h1v1h-1zM973 364h1v1h-1zM976 364h1v1h-1zM979 364h1v1h-1zM982 364h1v1h-1zM985 364h1v1h-1zM988 364h1v1h-1zM991 364h1v1h-1zM994 364h1v1h-1zM997 364h1v1h-1zM1000 364h1v1h-1zM1003 364h1v1h-1zM1006 364h1v1h-1zM1009 364h1v1h-1zM1012 364h1v1h-1zM1015 364h1v1h-1zM1018 364h1v1h-1zM19 117h1v1h-1zM39 117h1v1h-1zM59 117h1v1h-1zM79 117h1v1h-1zM99 117h1v1h-1zM119 117h1v1h-1zM139 117h1v1h-1zM159 117h1v1h-1zM179 117h1v1h-1zM199 117h1v1h-1zM219 117h1v1h-1zM239 117h1v1h-1zM259 117h1v1h-1zM279 117h1v1h-1zM299 117h1v1h-1zM319 117h1v1h-1zM339 117h1v1h-1zM359 117h1v1h-1zM379 117h1v1h-1zM399 117h1v1h-1zM419 117h1v1h-1zM439 117h1v1h-1zM459 117h1v1h-1zM479 117h1v1h-1zM499 117h1v1h-1zM519 117h1v1h-1zM539 117h1v1h-1zM559 117h1v1h-1zM579 117h1v1h-1zM599 117h1v1h-1zM619 117h1v1h-1zM639 117h1v1h-1zM659 117h1v1h-1zM679 117h1v1h-1zM699 117h1v1h-1zM719 117h1v1h-1zM739 117h1v1h-1zM759 117h1v1h-1zM779 117h1v1h-1zM799 117h1v1h-1zM819 117h1v1h-1zM839 117h1v1h-1zM859 117h1v1h-1zM879 117h1v1h-1zM899 117h1v1h-1zM919 117h1v1h-1zM939 117h1v1h-1zM959 117h1v1h-1zM979 117h1v1h-1zM999 117h1v1h-1zM19 342h1v1h-1zM39 342h1v1h-1zM59 342h1v1h-1zM79 342h1v1h-1zM99 342h1v1h-1zM119 342h1v1h-1zM139 342h1v1h-1zM159 342h1v1h-1zM179 342h1v1h-1zM199 342h1v1h-1zM219 342h1v1h-1zM239 342h1v1h-1zM259 342h1v1h-1zM279 342h1v1h-1zM299 342h1v1h-1zM319 342h1v1h-1zM339 342h1v1h-1zM359 342h1v1h-1zM379 342h1v1h-1zM399 342h1v1h-1zM419 342h1v1h-1zM439 342h1v1h-1zM459 342h1v1h-1zM479 342h1v1h-1zM499 342h1v1h-1zM519 342h1v1h-1zM539 342h1v1h-1zM559 342h1v1h-1zM579 342h1v1h-1zM599 342h1v1h-1zM619 342h1v1h-1zM639 342h1v1h-1zM659 342h1v1h-1zM679 342h1v1h-1zM699 342h1v1h-1zM719 342h1v1h-1zM739 342h1v1h-1zM759 342h1v1h-1zM779 342h1v1h-1zM799 342h1v1h-1zM819 342h1v1h-1zM839 342h1v1h-1zM859 342h1v1h-1zM879 342h1v1h-1zM899 342h1v1h-1zM919 342h1v1h-1zM939 342h1v1h-1zM959 342h1v1h-1zM979 342h1v1h-1zM999 342h1v1h-1z" fill="#666666"/><rect x="519" y="50" width="1" height="360" fill="#4c4c4c"/><rect x="517" y="58" width="5" height="1" fill="#4c4c4c"/><rect x="517" y="67" width="5" height="1" fill="#4c4c4c"/><rect x="517" y="76" width="5" height="1" fill="#4c4c4c"/><rect x="517" y="85" width="5" height="1" fill="#4c4c4c"/><rect x="517" y="94" width="5" height="1" fill="#4c4c4c"/><rect x="517" y="103" width="5" height="1" fill="#4c4c4c"/><rect x="517" y="112" width="5" height="1" fill="#4c4c4c"/><rect x="517" y="121" width="5" height="1" fill="#4c4c4c"/><rect x="517" y="130" width="5" height="1" fill="#4c4c4c"/><rect x="517" y="139" width="5" height="1" fill="#4c4c4c"/><rect x="517" y="148" width="5" height="1" fill="#4c4c4c"/><rect x="517" y="157" width="5" height="1" fill="#4c4c4c"/><rect x="517" y="166" width="5" height="1" fill="#4c4c4c"/><rect x="517" y="175" width="5" height="1" fill="#4c4c4c"/><rect x="517" y="184" width="5" height="1" fill="#4c4c4c"/><rect x="517" y="193" width="5" height="1" fill="#4c4c4c"/><rect x="517" y="202" width="5" height="1" fill="#4c4c4c"/><rect x="517" y="211" width="5" height="1" fill="#4c4c4c"/><rect x="517" y="220" width="5" height="1" fill="#4c4c4c"/><rect x="517" y="229" width="5" height="1" fill="#4c4c4c"/><rect x="517" y="238" width="5" height="1" fill="#4c4c4c"/><rect x="517" y="247" width="5" height="1" fill="#4c4c4c"/><rect x="517" y="256" width="5" height="1" fill="#4c4c4c"/><rect x="517" y="265" width="5" height="1" fill="#4c4c4c"/><rect x="517" y="274" width="5" height="1" fill="#4c4c4c"/><rect x="517" y="283" width="5" height="1" fill="#4c4c4c"/><rect x="517" y="292" width="5" height="1" fill="#4c4c4c"/><rect x="517" y="301" width="5" height="1" fill="#4c4c4c"/><rect x="517" y="310" width="5" height="1" fill="#4c4c4c"/><rect x="517" y="319" width="5" height="1" fill="#4c4c4c"/><rect x="517" y="328" width="5" height="1" fill="#4c4c4c"/><rect x="517" y="337" width="5" height="1" fill="#4c4c4c"/><rect x="517" y="346" width="5" height="1" fill="#4c4c4c"/><rect x="517" y="355" width="5" height="1" fill="#4c4c4c"/><rect x="517" y="364" width="5" height="1" fill="#4c4c4c"/><rect x="517" y="373" width="5" height="1" fill="#4c4c4c"/><rect x="517" y="382" width="5" height="1" fill="#4c4c4c"/><rect x="517" y="391" width="5" height="1" fill="#4c4c4c"/><rect x="517" y="400" width="5" height="1" fill="#4c4c4c"/><rect x="517" y="409" width="5" height="1" fill="#4c4c4c"/><rect x="19" y="229" width="1000" height="1" fill="#4c4c4c"/><rect x="39" y="227" width="1" height="5" fill="#4c4c4c"/><rect x="59" y="227" width="1" height="5" fill="#4c4c4c"/><rect x="79" y="227" width="1" height="5" fill="#4c4c4c"/><rect x="99" y="227" width="1" height="5" fill="#4c4c4c"/><rect x="119" y="227" width="1" height="5" fill="#4c4c4c"/><rect x="139" y="227" width="1" height="5" fill="#4c4c4c"/><rect x="159" y="227" width="1" height="5" fill="#4c4c4c"/><rect x="179" y="227" width="1" height="5" fill="#4c4c4c"/><rect x="199" y="227" width="1" height="5" fill="#4c4c4c"/><rect x="219" y="227" width="1" height="5" fill="#4c4c4c"/><rect x="239" y="227" width="1" height="5" fill="#4c4c4c"/><rect x="259" y="227" width="1" height="5" fill="#4c4c4c"/><rect x="279" y="227" width="1" height="5" fill="#4c4c4c"/><rect x="299" y="227" width="1" height="5" fill="#4c4c4c"/><rect x="319" y="227" width="1" height="5" fill="#4c4c4c"/><rect x="339" y="227" width="1" height="5" fill="#4c4c4c"/><rect x="359" y="227" width="1" height="5" fill="#4c4c4c"/><rect x="379" y="227" width="1" height="5" fill="#4c4c4c"/><rect x="399" y="227" width="1" height="5" fill="#4c4c4c"/><rect x="419" y="227" width="1" height="5" fill="#4c4c4c"/><rect x="439" y="227" width="1" height="5" fill="#4c4c4c"/><rect x="459" y="227" width="1" height="5" fill="#4c4c4c"/><rect x="479" y="227" width="1" height="5" fill="#4c4c4c"/><rect x="499" y="227" width="1" height="5" fill="#4c4c4c"/><rect x="519" y="227" width="1" height="5" fill="#4c4c4c"/><rect x="539" y="227" width="1" height="5" fill="#4c4c4c"/><rect x="559" y="227" width="1" height="5" fill="#4c4c4c"/><rect x="579" y="227" width="1" height="5" fill="#4c4c4c"/><rect x="599" y="227" width="1" height="5" fill="#4c4c4c"/><rect x="619" y="227" width="1" height="5" fill="#4c4c4c"/><rect x="639" y="227" width="1" height="5" fill="#4c4c4c"/><rect x="659" y="227" width="1" height="5" fill="#4c4c4c"/><rect x="679" y="227" width="1" height="5" fill="#4c4c4c"/><rect x="699" y="227" width="1" height="5" fill="#4c4c4c"/><rect x="719" y="227" width="1" height="5" fill="#4c4c4c"/><rect x="739" y="227" width="1" height="5" fill="#4c4c4c"/><rect x="759" y="227" width="1" height="5" fill="#4c4c4c"/><rect x="779" y="227" width="1" height="5" fill="#4c4c4c"/><rect x="799" y="227" width="1" height="5" fill="#4c4c4c"/><rect x="819" y="227" width="1" height="5" fill="#4c4c4c"/><rect x="839" y="227" width="1" height="5" fill="#4c4c4c"/><rect x="859" y="227" width="1" height="5" fill="#4c4c4c"/><rect x="879" y="227" width="1" height="5" fill="#4c4c4c"/><rect x="899" y="227" width="1" height="5" fill="#4c4c4c"/><rect x="919" y="227" width="1" height="5" fill="#4c4c4c"/><rect x="939" y="227" width="1" height="5" fill="#4c4c4c"/><rect x="959" y="227" width="1" height="5" fill="#4c4c4c"/><rect x="979" y="227" width="1" height="5" fill="#4c4c4c"/><rect x="999" y="227" width="1" height="5" fill="#4c4c4c"/><rect x="19" y="129" width="38" height="6" fill="#ff2e9c"/><rect x="56" y="62" width="1" height="73" fill="#b80a5c"/><rect x="56" y="62" width="251" height="4" fill="#ff2e9c"/><rect x="56" y="66" width="251" height="2" fill="#9a0f55"/><rect x="306" y="62" width="1" height="73" fill="#b80a5c"/><rect x="306" y="129" width="251" height="6" fill="#ff2e9c"/><rect x="556" y="62" width="1" height="73" fill="#b80a5c"/><rect x="556" y="62" width="251" height="4" fill="#ff2e9c"/><rect x="556" y="66" width="251" height="2" fill="#9a0f55"/><rect x="806" y="62" width="1" height="73" fill="#b80a5c"/><rect x="806" y="129" width="213" height="6" fill="#ff2e9c"/><rect x="19" y="158" width="1" height="52" fill="#00c4c4"/><rect x="19" y="158" width="13" height="6" fill="#00f2f2"/><rect x="19" y="164" width="13" height="1" fill="#007c7c"/><rect x="31" y="158" width="1" height="73" fill="#00c4c4"/><rect x="31" y="225" width="14" height="2" fill="#007c7c"/><rect x="31" y="227" width="14" height="4" fill="#00f2f2"/><rect x="44" y="158" width="1" height="73" fill="#00c4c4"/><rect x="44" y="158" width="13" height="6" fill="#00f2f2"/><rect x="44" y="164" width="13" height="1" fill="#007c7c"/><rect x="56" y="158" width="1" height="73" fill="#00c4c4"/><rect x="56" y="225" width="14" height="2" fill="#007c7c"/><rect x="56" y="227" width="14" height="4" fill="#00f2f2"/><rect x="69" y="158" width="1" height="73" fill="#00c4c4"/><rect x="69" y="158" width="13" height="6" fill="#00f2f2"/><rect x="69" y="164" width="13" height="1" fill="#007c7c"/><rect x="81" y="158" width="1" height="73" fill="#00c4c4"/><rect x="81" y="225" width="14" height="2" fill="#007c7c"/><rect x="81" y="227" width="14" height="4" fill="#00f2f2"/><rect x="94" y="158" width="1" height="73" fill="#00c4c4"/><rect x="94" y="158" width="13" height="6" fill="#00f2f2"/><rect x="94" y="164" width="13" height="1" fill="#007c7c"/><rect x="106" y="158" width="1" height="73" fill="#00c4c4"/><rect x="106" y="225" width="14" height="2" fill="#007c7c"/><rect x="106" y="227" width="14" height="4" fill="#00f2f2"/><rect x="119" y="158" width="1" height="73" fill="#00c4c4"/><rect x="119" y="158" width="13" height="6" fill="#00f2f2"/><rect x="119" y="164" width="13" height="1" fill="#007c7c"/><rect x="131" y="158" width="1" height="73" fill="#00c4c4"/><rect x="131" y="225" width="14" height="2" fill="#007c7c"/><rect x="131" y="227" width="14" height="4" fill="#00f2f2"/><rect x="144" y="158" width="1" height="73" fill="#00c4c4"/><rect x="144" y="158" width="13" height="6" fill="#00f2f2"/><rect x="144" y="164" width="13" height="1" fill="#007c7c"/><rect x="156" y="158" width="1" height="73" fill="#00c4c4"/><rect x="156" y="225" width="14" height="2" fill="#007c7c"/><rect x="156" y="227" width="14" height="4" fill="#00f2f2"/><rect x="169" y="158" width="1" height="73" fill="#00c4c4"/><rect x="169" y="158" width="13" height="6" fill="#00f2f2"/><rect x="169" y="164" width="13" height="1" fill="#007c7c"/><rect x="181" y="158" width="1" height="73" fill="#00c4c4"/><rect x="181" y="225" width="14" height="2" fill="#007c7c"/><rect x="181" y="227" width="14" height="4" fill="#00f2f2"/><rect x="194" y="158" width="1" height="73" fill="#00c4c4"/><rect x="194" y="158" width="13" height="6" fill="#00f2f2"/><rect x="194" y="164" width="13" height="1" fill="#007c7c"/><rect x="206" y="158" width="1" height="73" fill="#00c4c4"/><rect x="206" y="225" width="14" height="2" fill="#007c7c"/><rect x="206" y="227" width="14" height="4" fill="#00f2f2"/><rect x="219" y="158" width="1" height="73" fill="#00c4c4"/><rect x="219" y="158" width="13" height="6" fill="#00f2f2"/><rect x="219" y="164" width="13" height="1" fill="#007c7c"/><rect x="231" y="158" width="1" height="73" fill="#00c4c4"/><rect x="231" y="225" width="14" height="2" fill="#007c7c"/><rect x="231" y="227" width="14" height="4" fill="#00f2f2"/><rect x="244" y="158" width="1" height="73" fill="#00c4c4"/><rect x="244" y="158" width="13" height="6" fill="#00f2f2"/><rect x="244" y="164" width="13" height="1" fill="#007c7c"/><rect x="256" y="158" width="1" height="73" fill="#00c4c4"/><rect x="256" y="225" width="14" height="2" fill="#007c7c"/><rect x="256" y="227" width="14" height="4" fill="#00f2f2"/><rect x="269" y="158" width="1" height="73" fill="#00c4c4"/><rect x="269" y="158" width="13" height="6" fill="#00f2f2"/><rect x="269" y="164" width="13" height="1" fill="#007c7c"/><rect x="281" y="158" width="1" height="73" fill="#00c4c4"/><rect x="281" y="225" width="14" height="2" fill="#007c7c"/><rect x="281" y="227" width="14" height="4" fill="#00f2f2"/><rect x="294" y="158" width="1" height="73" fill="#00c4c4"/><rect x="294" y="158" width="13" height="6" fill="#00f2f2"/><rect x="294" y="164" width="13" height="1" fill="#007c7c"/><rect x="306" y="158" width="1" height="73" fill="#00c4c4"/><rect x="306" y="225" width="14" height="2" fill="#007c7c"/><rect x="306" y="227" width="14" height="4" fill="#00f2f2"/><rect x="319" y="158" width="1" height="73" fill="#00c4c4"/><rect x="319" y="158" width="13" height="6" fill="#00f2f2"/><rect x="319" y="164" width="13" height="1" fill="#007c7c"/><rect x="331" y="158" width="1" height="73" fill="#00c4c4"/><rect x="331" y="225" width="14" height="2" fill="#007c7c"/><rect x="331" y="227" width="14" height="4" fill="#00f2f2"/><rect x="344" y="158" width="1" height="73" fill="#00c4c4"/><rect x="344" y="158" width="13" height="6" fill="#00f2f2"/><rect x="344" y="164" width="13" height="1" fill="#007c7c"/><rect x="356" y="158" width="1" height="73" fill="#00c4c4"/><rect x="356" y="225" width="14" height="2" fill="#007c7c"/><rect x="356" y="227" width="14" height="4" fill="#00f2f2"/><rect x="369" y="158" width="1" height="73" fill="#00c4c4"/><rect x="369" y="158" width="13" height="6" fill="#00f2f2"/><rect x="369" y="164" width="13" height="1" fill="#007c7c"/><rect x="381" y="158" width="1" height="73" fill="#00c4c4"/><rect x="381" y="225" width="14" height="2" fill="#007c7c"/><rect x="381" y="227" width="14" height="4" fill="#00f2f2"/><rect x="394" y="158" width="1" height="73" fill="#00c4c4"/><rect x="394" y="158" width="13" height="6" fill="#00f2f2"/><rect x="394" y="164" width="13" height="1" fill="#007c7c"/><rect x="406" y="158" width="1" height="73" fill="#00c4c4"/><rect x="406" y="225" width="14" height="2" fill="#007c7c"/><rect x="406" y="227" width="14" height="4" fill="#00f2f2"/><rect x="419" y="158" width="1" height="73" fill="#00c4c4"/><rect x="419" y="158" width="13" height="6" fill="#00f2f2"/><rect x="419" y="164" width="13" height="1" fill="#007c7c"/><rect x="431" y="158" width="1" height="73" fill="#00c4c4"/><rect x="431" y="225" width="14" height="2" fill="#007c7c"/><rect x="431" y="227" width="14" height="4" fill="#00f2f2"/><rect x="444" y="158" width="1" height="73" fill="#00c4c4"/><rect x="444" y="158" width="13" height="6" fill="#00f2f2"/><rect x="444" y="164" width="13" height="1" fill="#007c7c"/><rect x="456" y="158" width="1" height="73" fill="#00c4c4"/><rect x="456" y="225" width="14" height="2" fill="#007c7c"/><rect x="456" y="227" width="14" height="4" fill="#00f2f2"/><rect x="469" y="158" width="1" height="73" fill="#00c4c4"/><rect x="469" y="158" width="13" height="6" fill="#00f2f2"/><rect x="469" y="164" width="13" height="1" fill="#007c7c"/><rect x="481" y="158" width="1" height="73" fill="#00c4c4"/><rect x="481" y="225" width="14" height="2" fill="#007c7c"/><rect x="481" y="227" width="14" height="4" fill="#00f2f2"/><rect x="494" y="158" width="1" height="73" fill="#00c4c4"/><rect x="494" y="158" width="13" height="6" fill="#00f2f2"/><rect x="494" y="164" width="13" height="1" fill="#007c7c"/><rect x="506" y="158" width="1" height="73" fill="#00c4c4"/><rect x="506" y="225" width="14" height="2" fill="#007c7c"/><rect x="506" y="227" width="14" height="4" fill="#00f2f2"/><rect x="519" y="158" width="1" height="73" fill="#00c4c4"/><rect x="519" y="158" width="13" height="6" fill="#00f2f2"/><rect x="519" y="164" width="13" height="1" fill="#007c7c"/><rect x="531" y="158" width="1" height="73" fill="#00c4c4"/><rect x="531" y="225" width="14" height="2" fill="#007c7c"/><rect x="531" y="227" width="14" height="4" fill="#00f2f2"/><rect x="544" y="158" width="1" height="73" fill="#00c4c4"/><rect x="544" y="158" width="13" height="6" fill="#00f2f2"/><rect x="544" y="164" width="13" height="1" fill="#007c7c"/><rect x="556" y="158" width="1" height="73" fill="#00c4c4"/><rect x="556" y="225" width="14" height="2" fill="#007c7c"/><rect x="556" y="227" width="14" height="4" fill="#00f2f2"/><rect x="569" y="158" width="1" height="73" fill="#00c4c4"/><rect x="569" y="158" width="13" height="6" fill="#00f2f2"/><rect x="569" y="164" width="13" height="1" fill="#007c7c"/><rect x="581" y="158" width="1" height="73" fill="#00c4c4"/><rect x="581" y="225" width="14" height="2" fill="#007c7c"/><rect x="581" y="227" width="14" height="4" fill="#00f2f2"/><rect x="594" y="158" width="1" height="73" fill="#00c4c4"/><rect x="594" y="158" width="13" height="6" fill="#00f2f2"/><rect x="594" y="164" width="13" height="1" fill="#007c7c"/><rect x="606" y="158" width="1" height="73" fill="#00c4c4"/><rect x="606" y="225" width="14" height="2" fill="#007c7c"/><rect x="606" y="227" width="14" height="4" fill="#00f2f2"/><rect x="619" y="158" width="1" height="73" fill="#00c4c4"/><rect x="619" y="158" width="13" height="6" fill="#00f2f2"/><rect x="619" y="164" width="13" height="1" fill="#007c7c"/><rect x="631" y="158" width="1" height="73" fill="#00c4c4"/><rect x="631" y="225" width="14" height="2" fill="#007c7c"/><rect x="631" y="227" width="14" height="4" fill="#00f2f2"/><rect x="644" y="158" width="1" height="73" fill="#00c4c4"/><rect x="644" y="158" width="13" height="6" fill="#00f2f2"/><rect x="644" y="164" width="13" height="1" fill="#007c7c"/><rect x="656" y="158" width="1" height="73" fill="#00c4c4"/><rect x="656" y="225" width="14" height="2" fill="#007c7c"/><rect x="656" y="227" width="14" height="4" fill="#00f2f2"/><rect x="669" y="158" width="1" height="73" fill="#00c4c4"/><rect x="669" y="158" width="13" height="6" fill="#00f2f2"/><rect x="669" y="164" width="13" height="1" fill="#007c7c"/><rect x="681" y="158" width="1" height="73" fill="#00c4c4"/><rect x="681" y="225" width="14" height="2" fill="#007c7c"/><rect x="681" y="227" width="14" height="4" fill="#00f2f2"/><rect x="694" y="158" width="1" height="73" fill="#00c4c4"/><rect x="694" y="158" width="13" height="6" fill="#00f2f2"/><rect x="694" y="164" width="13" height="1" fill="#007c7c"/><rect x="706" y="158" width="1" height="73" fill="#00c4c4"/><rect x="706" y="225" width="14" height="2" fill="#007c7c"/><rect x="706" y="227" width="14" height="4" fill="#00f2f2"/><rect x="719" y="158" width="1" height="73" fill="#00c4c4"/><rect x="719" y="158" width="13" height="6" fill="#00f2f2"/><rect x="719" y="164" width="13" height="1" fill="#007c7c"/><rect x="731" y="158" width="1" height="73" fill="#00c4c4"/><rect x="731" y="225" width="14" height="2" fill="#007c7c"/><rect x="731" y="227" width="14" height="4" fill="#00f2f2"/><rect x="744" y="158" width="1" height="73" fill="#00c4c4"/><rect x="744" y="158" width="13" height="6" fill="#00f2f2"/><rect x="744" y="164" width="13" height="1" fill="#007c7c"/><rect x="756" y="158" width="1" height="73" fill="#00c4c4"/><rect x="756" y="225" width="14" height="2" fill="#007c7c"/><rect x="756" y="227" width="14" height="4" fill="#00f2f2"/><rect x="769" y="158" width="1" height="73" fill="#00c4c4"/><rect x="769" y="158" width="13" height="6" fill="#00f2f2"/><rect x="769" y="164" width="13" height="1" fill="#007c7c"/><rect x="781" y="158" width="1" height="73" fill="#00c4c4"/><rect x="781" y="225" width="14" height="2" fill="#007c7c"/><rect x="781" y="227" width="14" height="4" fill="#00f2f2"/><rect x="794" y="158" width="1" height="73" fill="#00c4c4"/><rect x="794" y="158" width="13" height="6" fill="#00f2f2"/><rect x="794" y="164" width="13" height="1" fill="#007c7c"/><rect x="806" y="158" width="1" height="73" fill="#00c4c4"/><rect x="806" y="225" width="14" height="2" fill="#007c7c"/><rect x="806" y="227" width="14" height="4" fill="#00f2f2"/><rect x="819" y="158" width="1" height="73" fill="#00c4c4"/><rect x="819" y="158" width="13" height="6" fill="#00f2f2"/><rect x="819" y="164" width="13" height="1" fill="#007c7c"/><rect x="831" y="158" width="1" height="73" fill="#00c4c4"/><rect x="831" y="225" width="14" height="2" fill="#007c7c"/><rect x="831" y="227" width="14" height="4" fill="#00f2f2"/><rect x="844" y="158" width="1" height="73" fill="#00c4c4"/><rect x="844" y="158" width="13" height="6" fill="#00f2f2"/><rect x="844" y="164" width="13" height="1" fill="#007c7c"/><rect x="856" y="158" width="1" height="73" fill="#00c4c4"/><rect x="856" y="225" width="14" height="2" fill="#007c7c"/><rect x="856" y="227" width="14" height="4" fill="#00f2f2"/><rect x="869" y="158" width="1" height="73" fill="#00c4c4"/><rect x="869" y="158" width="13" height="6" fill="#00f2f2"/><rect x="869" y="164" width="13" height="1" fill="#007c7c"/><rect x="881" y="158" width="1" height="73" fill="#00c4c4"/><rect x="881" y="225" width="14" height="2" fill="#007c7c"/><rect x="881" y="227" width="14" height="4" fill="#00f2f2"/><rect x="894" y="158" width="1" height="73" fill="#00c4c4"/><rect x="894" y="158" width="13" height="6" fill="#00f2f2"/><rect x="894" y="164" width="13" height="1" fill="#007c7c"/><rect x="906" y="158" width="1" height="73" fill="#00c4c4"/><rect x="906" y="225" width="14" height="2" fill="#007c7c"/><rect x="906" y="227" width="14" height="4" fill="#00f2f2"/><rect x="919" y="158" width="1" height="73" fill="#00c4c4"/><rect x="919" y="158" width="13" height="6" fill="#00f2f2"/><rect x="919" y="164" width="13" height="1" fill="#007c7c"/><rect x="931" y="158" width="1" height="73" fill="#00c4c4"/><rect x="931" y="225" width="14" height="2" fill="#007c7c"/><rect x="931" y="227" width="14" height="4" fill="#00f2f2"/><rect x="944" y="158" width="1" height="73" fill="#00c4c4"/><rect x="944" y="158" width="13" height="6" fill="#00f2f2"/><rect x="944" y="164" width="13" height="1" fill="#007c7c"/><rect x="956" y="158" width="1" height="73" fill="#00c4c4"/><rect x="956" y="225" width="14" height="2" fill="#007c7c"/><rect x="956" y="227" width="14" height="4" fill="#00f2f2"/><rect x="969" y="158" width="1" height="73" fill="#00c4c4"/><rect x="969" y="158" width="13" height="6" fill="#00f2f2"/><rect x="969" y="164" width="13" height="1" fill="#007c7c"/><rect x="981" y="158" width="1" height="73" fill="#00c4c4"/><rect x="981" y="225" width="14" height="2" fill="#007c7c"/><rect x="981" y="227" width="14" height="4" fill="#00f2f2"/><rect x="994" y="158" width="1" height="73" fill="#00c4c4"/><rect x="994" y="158" width="13" height="6" fill="#00f2f2"/><rect x="994" y="164" width="13" height="1" fill="#007c7c"/><rect x="1006" y="158" width="1" height="73" fill="#00c4c4"/><rect x="1006" y="225" width="13" height="2" fill="#007c7c"/><rect x="1006" y="227" width="13" height="4" fill="#00f2f2"/><rect x="1018" y="206" width="1" height="25" fill="#00c4c4"/><rect x="19" y="267" width="4" height="6" fill="#00ff12"/><rect x="19" y="273" width="4" height="2" fill="#007a08"/><rect x="22" y="267" width="1" height="76" fill="#0c8c0c"/><rect x="22" y="336" width="6" height="6" fill="#00ff12"/><rect x="22" y="342" width="6" height="2" fill="#007a08"/><rect x="27" y="267" width="1" height="76" fill="#0c8c0c"/><rect x="27" y="267" width="6" height="6" fill="#00ff12"/><rect x="27" y="273" width="6" height="2" fill="#007a08"/><rect x="32" y="267" width="1" height="76" fill="#0c8c0c"/><rect x="32" y="336" width="11" height="6" fill="#00ff12"/><rect x="32" y="342" width="11" height="2" fill="#007a08"/><rect x="42" y="267" width="1" height="76" fill="#0c8c0c"/><rect x="42" y="267" width="6" height="6" fill="#00ff12"/><rect x="42" y="273" width="6" height="2" fill="#007a08"/><rect x="47" y="267" width="1" height="76" fill="#0c8c0c"/><rect x="47" y="336" width="19" height="6" fill="#00ff12"/><rect x="47" y="342" width="19" height="2" fill="#007a08"/><rect x="65" y="267" width="1" height="76" fill="#0c8c0c"/><rect x="65" y="267" width="15" height="6" fill="#00ff12"/><rect x="65" y="273" width="15" height="2" fill="#007a08"/><rect x="79" y="267" width="1" height="76" fill="#0c8c0c"/><rect x="79" y="336" width="16" height="6" fill="#00ff12"/><rect x="79" y="342" width="16" height="2" fill="#007a08"/><rect x="94" y="267" width="1" height="76" fill="#0c8c0c"/><rect x="94" y="267" width="12" height="6" fill="#00ff12"/><rect x="94" y="273" width="12" height="2" fill="#007a08"/><rect x="105" y="267" width="1" height="76" fill="#0c8c0c"/><rect x="105" y="336" width="44" height="6" fill="#00ff12"/><rect x="105" y="342" width="44" height="2" fill="#007a08"/><rect x="148" y="267" width="1" height="76" fill="#0c8c0c"/><rect x="148" y="267" width="23" height="6" fill="#00ff12"/><rect x="148" y="273" width="23" height="2" fill="#007a08"/><rect x="170" y="267" width="1" height="76" fill="#0c8c0c"/><rect x="170" y="336" width="25" height="6" fill="#00ff12"/><rect x="170" y="342" width="25" height="2" fill="#007a08"/><rect x="194" y="267" width="1" height="76" fill="#0c8c0c"/><rect x="194" y="267" width="6" height="6" fill="#00ff12"/><rect x="194" y="273" width="6" height="2" fill="#007a08"/><rect x="199" y="267" width="1" height="76" fill="#0c8c0c"/><rect x="199" y="336" width="6" height="6" fill="#00ff12"/><rect x="199" y="342" width="6" height="2" fill="#007a08"/><rect x="204" y="267" width="1" height="76" fill="#0c8c0c"/><rect x="204" y="267" width="6" height="6" fill="#00ff12"/><rect x="204" y="273" width="6" height="2" fill="#007a08"/><rect x="209" y="267" width="1" height="76" fill="#0c8c0c"/><rect x="209" y="336" width="21" height="6" fill="#00ff12"/><rect x="209" y="342" width="21" height="2" fill="#007a08"/><rect x="229" y="267" width="1" height="76" fill="#0c8c0c"/><rect x="229" y="267" width="6" height="6" fill="#00ff12"/><rect x="229" y="273" width="6" height="2" fill="#007a08"/><rect x="234" y="267" width="1" height="76" fill="#0c8c0c"/><rect x="234" y="336" width="14" height="6" fill="#00ff12"/><rect x="234" y="342" width="14" height="2" fill="#007a08"/><rect x="247" y="267" width="1" height="76" fill="#0c8c0c"/><rect x="247" y="267" width="6" height="6" fill="#00ff12"/><rect x="247" y="273" width="6" height="2" fill="#007a08"/><rect x="252" y="267" width="1" height="76" fill="#0c8c0c"/><rect x="252" y="336" width="6" height="6" fill="#00ff12"/><rect x="252" y="342" width="6" height="2" fill="#007a08"/><rect x="257" y="267" width="1" height="76" fill="#0c8c0c"/><rect x="257" y="267" width="11" height="6" fill="#00ff12"/><rect x="257" y="273" width="11" height="2" fill="#007a08"/><rect x="267" y="267" width="1" height="76" fill="#0c8c0c"/><rect x="267" y="336" width="33" height="6" fill="#00ff12"/><rect x="267" y="342" width="33" height="2" fill="#007a08"/><rect x="299" y="267" width="1" height="76" fill="#0c8c0c"/><rect x="299" y="267" width="11" height="6" fill="#00ff12"/><rect x="299" y="273" width="11" height="2" fill="#007a08"/><rect x="309" y="267" width="1" height="76" fill="#0c8c0c"/><rect x="309" y="336" width="26" height="6" fill="#00ff12"/><rect x="309" y="342" width="26" height="2" fill="#007a08"/><rect x="334" y="267" width="1" height="76" fill="#0c8c0c"/><rect x="334" y="267" width="45" height="6" fill="#00ff12"/><rect x="334" y="273" width="45" height="2" fill="#007a08"/><rect x="378" y="267" width="1" height="76" fill="#0c8c0c"/><rect x="378" y="336" width="30" height="6" fill="#00ff12"/><rect x="378" y="342" width="30" height="2" fill="#007a08"/><rect x="407" y="267" width="1" height="76" fill="#0c8c0c"/><rect x="407" y="267" width="21" height="6" fill="#00ff12"/><rect x="407" y="273" width="21" height="2" fill="#007a08"/><rect x="427" y="267" width="1" height="76" fill="#0c8c0c"/><rect x="427" y="336" width="6" height="6" fill="#00ff12"/><rect x="427" y="342" width="6" height="2" fill="#007a08"/><rect x="432" y="267" width="1" height="76" fill="#0c8c0c"/><rect x="432" y="267" width="11" height="6" fill="#00ff12"/><rect x="432" y="273" width="11" height="2" fill="#007a08"/><rect x="442" y="267" width="1" height="76" fill="#0c8c0c"/><rect x="442" y="336" width="19" height="6" fill="#00ff12"/><rect x="442" y="342" width="19" height="2" fill="#007a08"/><rect x="460" y="267" width="1" height="76" fill="#0c8c0c"/><rect x="460" y="267" width="11" height="6" fill="#00ff12"/><rect x="460" y="273" width="11" height="2" fill="#007a08"/><rect x="470" y="267" width="1" height="76" fill="#0c8c0c"/><rect x="470" y="336" width="21" height="6" fill="#00ff12"/><rect x="470" y="342" width="21" height="2" fill="#007a08"/><rect x="490" y="267" width="1" height="76" fill="#0c8c0c"/><rect x="490" y="267" width="11" height="6" fill="#00ff12"/><rect x="490" y="273" width="11" height="2" fill="#007a08"/><rect x="500" y="267" width="1" height="76" fill="#0c8c0c"/><rect x="500" y="336" width="6" height="6" fill="#00ff12"/><rect x="500" y="342" width="6" height="2" fill="#007a08"/><rect x="505" y="267" width="1" height="76" fill="#0c8c0c"/><rect x="505" y="267" width="18" height="6" fill="#00ff12"/><rect x="505" y="273" width="18" height="2" fill="#007a08"/><rect x="522" y="267" width="1" height="76" fill="#0c8c0c"/><rect x="522" y="336" width="6" height="6" fill="#00ff12"/><rect x="522" y="342" width="6" height="2" fill="#007a08"/><rect x="527" y="267" width="1" height="76" fill="#0c8c0c"/><rect x="527" y="267" width="6" height="6" fill="#00ff12"/><rect x="527" y="273" width="6" height="2" fill="#007a08"/><rect x="532" y="267" width="1" height="76" fill="#0c8c0c"/><rect x="532" y="336" width="11" height="6" fill="#00ff12"/><rect x="532" y="342" width="11" height="2" fill="#007a08"/><rect x="542" y="267" width="1" height="76" fill="#0c8c0c"/><rect x="542" y="267" width="6" height="6" fill="#00ff12"/><rect x="542" y="273" width="6" height="2" fill="#007a08"/><rect x="547" y="267" width="1" height="76" fill="#0c8c0c"/><rect x="547" y="336" width="19" height="6" fill="#00ff12"/><rect x="547" y="342" width="19" height="2" fill="#007a08"/><rect x="565" y="267" width="1" height="76" fill="#0c8c0c"/><rect x="565" y="267" width="15" height="6" fill="#00ff12"/><rect x="565" y="273" width="15" height="2" fill="#007a08"/><rect x="579" y="267" width="1" height="76" fill="#0c8c0c"/><rect x="579" y="336" width="16" height="6" fill="#00ff12"/><rect x="579" y="342" width="16" height="2" fill="#007a08"/><rect x="594" y="267" width="1" height="76" fill="#0c8c0c"/><rect x="594" y="267" width="12" height="6" fill="#00ff12"/><rect x="594" y="273" width="12" height="2" fill="#007a08"/><rect x="605" y="267" width="1" height="76" fill="#0c8c0c"/><rect x="605" y="336" width="44" height="6" fill="#00ff12"/><rect x="605" y="342" width="44" height="2" fill="#007a08"/><rect x="648" y="267" width="1" height="76" fill="#0c8c0c"/><rect x="648" y="267" width="23" height="6" fill="#00ff12"/><rect x="648" y="273" width="23" height="2" fill="#007a08"/><rect x="670" y="267" width="1" height="76" fill="#0c8c0c"/><rect x="670" y="336" width="25" height="6" fill="#00ff12"/><rect x="670" y="342" width="25" height="2" fill="#007a08"/><rect x="694" y="267" width="1" height="76" fill="#0c8c0c"/><rect x="694" y="267" width="6" height="6" fill="#00ff12"/><rect x="694" y="273" width="6" height="2" fill="#007a08"/><rect x="699" y="267" width="1" height="76" fill="#0c8c0c"/><rect x="699" y="336" width="6" height="6" fill="#00ff12"/><rect x="699" y="342" width="6" height="2" fill="#007a08"/><rect x="704" y="267" width="1" height="76" fill="#0c8c0c"/><rect x="704" y="267" width="6" height="6" fill="#00ff12"/><rect x="704" y="273" width="6" height="2" fill="#007a08"/><rect x="709" y="267" width="1" height="76" fill="#0c8c0c"/><rect x="709" y="336" width="21" height="6" fill="#00ff12"/><rect x="709" y="342" width="21" height="2" fill="#007a08"/><rect x="729" y="267" width="1" height="76" fill="#0c8c0c"/><rect x="729" y="267" width="6" height="6" fill="#00ff12"/><rect x="729" y="273" width="6" height="2" fill="#007a08"/><rect x="734" y="267" width="1" height="76" fill="#0c8c0c"/><rect x="734" y="336" width="14" height="6" fill="#00ff12"/><rect x="734" y="342" width="14" height="2" fill="#007a08"/><rect x="747" y="267" width="1" height="76" fill="#0c8c0c"/><rect x="747" y="267" width="6" height="6" fill="#00ff12"/><rect x="747" y="273" width="6" height="2" fill="#007a08"/><rect x="752" y="267" width="1" height="76" fill="#0c8c0c"/><rect x="752" y="336" width="6" height="6" fill="#00ff12"/><rect x="752" y="342" width="6" height="2" fill="#007a08"/><rect x="757" y="267" width="1" height="76" fill="#0c8c0c"/><rect x="757" y="267" width="11" height="6" fill="#00ff12"/><rect x="757" y="273" width="11" height="2" fill="#007a08"/><rect x="767" y="267" width="1" height="76" fill="#0c8c0c"/><rect x="767" y="336" width="33" height="6" fill="#00ff12"/><rect x="767" y="342" width="33" height="2" fill="#007a08"/><rect x="799" y="267" width="1" height="76" fill="#0c8c0c"/><rect x="799" y="267" width="11" height="6" fill="#00ff12"/><rect x="799" y="273" width="11" height="2" fill="#007a08"/><rect x="809" y="267" width="1" height="76" fill="#0c8c0c"/><rect x="809" y="336" width="26" height="6" fill="#00ff12"/><rect x="809" y="342" width="26" height="2" fill="#007a08"/><rect x="834" y="267" width="1" height="76" fill="#0c8c0c"/><rect x="834" y="267" width="45" height="6" fill="#00ff12"/><rect x="834" y="273" width="45" height="2" fill="#007a08"/><rect x="878" y="267" width="1" height="76" fill="#0c8c0c"/><rect x="878" y="336" width="30" height="6" fill="#00ff12"/><rect x="878" y="342" width="30" height="2" fill="#007a08"/><rect x="907" y="267" width="1" height="76" fill="#0c8c0c"/><rect x="907" y="267" width="21" height="6" fill="#00ff12"/><rect x="907" y="273" width="21" height="2" fill="#007a08"/><rect x="927" y="267" width="1" height="76" fill="#0c8c0c"/><rect x="927" y="336" width="6" height="6" fill="#00ff12"/><rect x="927" y="342" width="6" height="2" fill="#007a08"/><rect x="932" y="267" width="1" height="76" fill="#0c8c0c"/><rect x="932" y="267" width="11" height="6" fill="#00ff12"/><rect x="932" y="273" width="11" height="2" fill="#007a08"/><rect x="942" y="267" width="1" height="76" fill="#0c8c0c"/><rect x="942" y="336" width="19" height="6" fill="#00ff12"/><rect x="942" y="342" width="19" height="2" fill="#007a08"/><rect x="960" y="267" width="1" height="76" fill="#0c8c0c"/><rect x="960" y="267" width="11" height="6" fill="#00ff12"/><rect x="960" y="273" width="11" height="2" fill="#007a08"/><rect x="970" y="267" width="1" height="76" fill="#0c8c0c"/><rect x="970" y="336" width="21" height="6" fill="#00ff12"/><rect x="970" y="342" width="21" height="2" fill="#007a08"/><rect x="990" y="267" width="1" height="76" fill="#0c8c0c"/><rect x="990" y="267" width="11" height="6" fill="#00ff12"/><rect x="990" y="273" width="11" height="2" fill="#007a08"/><rect x="1000" y="267" width="1" height="76" fill="#0c8c0c"/><rect x="1000" y="336" width="6" height="6" fill="#00ff12"/><rect x="1000" y="342" width="6" height="2" fill="#007a08"/><rect x="1005" y="267" width="1" height="76" fill="#0c8c0c"/><rect x="1005" y="267" width="14" height="6" fill="#00ff12"/><rect x="1005" y="273" width="14" height="2" fill="#007a08"/><path d="M509 50H529L519 60Z" fill="#1a80e6"/><path d="M4.5 91.5H11.5L17.5 97.5L11.5 103.5H4.5Z" fill="none" stroke="#ff2e9c" stroke-width="1" shape-rendering="auto"/><path d="M4.5 188.5H11.5L17.5 194.5L11.5 200.5H4.5Z" fill="none" stroke="#00f2f2" stroke-width="1" shape-rendering="auto"/><path d="M4 299H12L18 305.5L12 312H4Z" fill="#10c020"/><text x="6" y="101.5" font-size="10" fill="#ff2e9c" font-family="Liberation Sans">2</text><text x="6" y="198.5" font-size="10" fill="#00f2f2" font-family="Liberation Sans">3</text><text x="6" y="309.5" font-size="10" fill="#3a2a00" font-family="Liberation Sans">4</text><rect x="38" y="399" width="1" height="1" fill="#08c0d0"/><rect x="38" y="399" width="55" height="1" fill="#08c0d0"/><rect x="280" y="399" width="64" height="1" fill="#08c0d0"/><rect x="530" y="399" width="64" height="1" fill="#08c0d0"/><rect x="780" y="399" width="64" height="1" fill="#08c0d0"/><path d="M92.5 395.5L97.5 390.5H275.5L280.5 395.5V403.5L275.5 408.5H97.5L92.5 403.5Z" fill="#02484e" stroke="#08c0d0" stroke-width="1" shape-rendering="auto"/><text x="95" y="404" font-size="12.5" fill="#ffffff" font-family="Liberation Sans">R=0x10</text><path d="M343.5 395.5L348.5 390.5H525.5L530.5 395.5V403.5L525.5 408.5H348.5L343.5 403.5Z" fill="#02484e" stroke="#08c0d0" stroke-width="1" shape-rendering="auto"/><text x="346" y="404" font-size="12.5" fill="#ffffff" font-family="Liberation Sans">L=0xD7</text><path d="M593.5 395.5L598.5 390.5H775.5L780.5 395.5V403.5L775.5 408.5H598.5L593.5 403.5Z" fill="#02484e" stroke="#08c0d0" stroke-width="1" shape-rendering="auto"/><text x="596" y="404" font-size="12.5" fill="#ffffff" font-family="Liberation Sans">R=0x10</text><path d="M843.5 395.5L848.5 390.5H1012.5L1017.5 395.5V403.5L1012.5 408.5H848.5L843.5 403.5Z" fill="#02484e" stroke="#08c0d0" stroke-width="1" shape-rendering="auto"/><text x="846" y="404" font-size="12.5" fill="#ffffff" font-family="Liberation Sans">L=0xD7</text><rect x="18" y="389" width="20" height="16" fill="#0b4a4c"/></svg>
<div class="a" style="left:1px;top:389px;font-size:14px;line-height:14px;color:#fff">S1</div>
<div class="a" style="left:18px;top:390px;font-size:13px;line-height:14px;color:#f0f0f0">I2S</div>

<!-- TABLE -->
<div class="a" style="left:0;top:415px;width:1024px;height:1px;background:#1e1e1e"></div>
<div class="a" style="left:1px;top:416px;width:999px;height:117px;background:#0c0c0c;border-left:1px solid #1c1c1c"></div>
<div class="a" style="left:3px;top:417px;width:997px;height:21px;background:#222222"></div>
<div class="a" style="left:2px;top:457px;width:998px;height:19px;background:#242424"></div>
<div class="a" style="left:2px;top:438px;width:998px;height:1px;background:#060606"></div><div class="a" style="left:2px;top:456px;width:998px;height:1px;background:#060606"></div>
<div class="a" style="left:2px;top:476px;width:998px;height:1px;background:#060606"></div>
<div class="a" style="left:2px;top:495px;width:998px;height:1px;background:#060606"></div>
<div class="a" style="left:2px;top:514px;width:998px;height:1px;background:#060606"></div>
<div class="a" style="left:60px;top:416px;width:1px;height:117px;background:#060606"></div>
<div class="a" style="left:180px;top:416px;width:1px;height:117px;background:#060606"></div>
<div class="a" style="left:300px;top:416px;width:1px;height:117px;background:#060606"></div>
<div class="a" style="left:560px;top:416px;width:1px;height:117px;background:#060606"></div>
<div class="a" style="left:0;top:533px;width:1024px;height:2px;background:#1a1a1a"></div>

<div class="a th" style="left:2px;top:421px;width:58px">I2S</div>
<div class="a th" style="left:61px;top:421px;width:119px">Time</div>
<div class="a th" style="left:181px;top:421px;width:119px">Type</div>
<div class="a th" style="left:301px;top:421px;width:259px">Data</div>
<div class="a th" style="left:561px;top:421px;width:438px">Error</div>

<div class="a th" style="left:2px;top:440px;width:58px">1</div>
<div class="a th" style="left:61px;top:440px;width:119px">-850.006us</div>
<div class="a th" style="left:181px;top:440px;width:119px">Right CH</div>
<div class="a th" style="left:301px;top:440px;width:259px">0x10</div>
<div class="a th" style="left:2px;top:459px;width:58px;color:#1cb8c0">2</div>
<div class="a th" style="left:61px;top:459px;width:119px;color:#1cb8c0">-349.994us</div>
<div class="a th" style="left:181px;top:459px;width:119px;color:#1cb8c0">Left CH</div>
<div class="a th" style="left:301px;top:459px;width:259px;color:#1cb8c0">0xD7</div>
<div class="a th" style="left:2px;top:478px;width:58px">3</div>
<div class="a th" style="left:61px;top:478px;width:119px">150.006us</div>
<div class="a th" style="left:181px;top:478px;width:119px">Right CH</div>
<div class="a th" style="left:301px;top:478px;width:259px">0x10</div>
<div class="a th" style="left:2px;top:497px;width:58px">4</div>
<div class="a th" style="left:61px;top:497px;width:119px">650.007us</div>
<div class="a th" style="left:181px;top:497px;width:119px">Left CH</div>
<div class="a th" style="left:301px;top:497px;width:259px">0xD7</div>

<!-- scrollbar -->
<div class="a" style="left:1000px;top:416px;width:24px;height:117px;background:#0c0c0c"></div>
<div class="a" style="left:1001px;top:417px;width:22px;height:21px;background:#262626"></div>
<div class="a" style="left:1001px;top:440px;width:22px;height:23px;background:#0a0a0a;border:1px solid #1e1e1e"></div>
<div class="a" style="left:1001px;top:463px;width:22px;height:44px;background:#181818;border:1px solid #1e1e1e"></div>
<div class="a" style="left:1002px;top:464px;width:20px;height:33px;background:#333"></div>
<div class="a" style="left:1001px;top:508px;width:22px;height:24px;background:#0a0a0a;border:1px solid #1e1e1e"></div>
<svg class="a" style="left:1000px;top:416px" width="24" height="117" viewBox="0 0 24 117">
 <path d="M6 6L18 18M18 6L6 18" stroke="#4a4a4a" stroke-width="1.5" fill="none"/>
 <path d="M4 39L12 31L20 39" stroke="#fff" stroke-width="2.6" fill="none"/>
 <path d="M4 99L12 107L20 99" stroke="#fff" stroke-width="2.6" fill="none"/>
</svg>

<!-- STATUS BAR -->
<div class="a" style="left:0;top:535px;width:1024px;height:65px;background:#0c0c0c"></div>
<div class="a" style="left:4px;top:539px;width:94px;height:57px;background:#3e3e3e;border-radius:3px"></div><div class="a" style="left:39px;top:540px;width:58px;height:18px;background:#1b1b1b;border-radius:0 2px 0 2px"></div><div class="a" style="left:6px;top:541px;width:31px;height:17px;background:#ff1490;border-radius:2px"></div><div class="a" style="left:6px;top:542px;width:31px;font-size:13px;line-height:14px;text-align:center;color:#101010">C2</div><div class="a" style="left:64px;top:542px;width:31px;height:14px;background:#0e0e0e;border-radius:2px"></div><div class="a" style="left:4px;top:543px;width:91px;font-size:11px;line-height:12px;text-align:right;color:#ff2a8a">DC1M</div><div class="a st" style="left:4px;top:562px;width:91px;text-align:right;font-size:13.3px">2.00V/div</div><div class="a st" style="left:4px;top:580px;width:91px;text-align:right;font-size:13.3px">5.83V</div><div class="a st" style="left:8px;top:580px;font-size:13.3px;color:#ff2a9a">1X</div><div class="a" style="left:102px;top:539px;width:94px;height:57px;background:#3e3e3e;border-radius:3px"></div><div class="a" style="left:137px;top:540px;width:58px;height:18px;background:#1b1b1b;border-radius:0 2px 0 2px"></div><div class="a" style="left:104px;top:541px;width:31px;height:17px;background:#00c4d2;border-radius:2px"></div><div class="a" style="left:104px;top:542px;width:31px;font-size:13px;line-height:14px;text-align:center;color:#101010">C3</div><div class="a" style="left:162px;top:542px;width:31px;height:14px;background:#0e0e0e;border-radius:2px"></div><div class="a" style="left:102px;top:543px;width:91px;font-size:11px;line-height:12px;text-align:right;color:#18c4d8">DC1M</div><div class="a st" style="left:102px;top:562px;width:91px;text-align:right;font-size:13.3px">2.00V/div</div><div class="a st" style="left:102px;top:580px;width:91px;text-align:right;font-size:13.3px">1.53V</div><div class="a st" style="left:106px;top:580px;font-size:13.3px;color:#18b4c4">1X</div><div class="a" style="left:200px;top:539px;width:94px;height:57px;background:#3e3e3e;border-radius:3px"></div><div class="a" style="left:235px;top:540px;width:58px;height:18px;background:#1b1b1b;border-radius:0 2px 0 2px"></div><div class="a" style="left:202px;top:541px;width:31px;height:17px;background:#10c020;border-radius:2px"></div><div class="a" style="left:202px;top:542px;width:31px;font-size:13px;line-height:14px;text-align:center;color:#101010">C4</div><div class="a" style="left:260px;top:542px;width:31px;height:14px;background:#0e0e0e;border-radius:2px"></div><div class="a" style="left:200px;top:543px;width:91px;font-size:11px;line-height:12px;text-align:right;color:#20c020">DC1M</div><div class="a st" style="left:200px;top:562px;width:91px;text-align:right;font-size:13.3px">2.00V/div</div><div class="a st" style="left:200px;top:580px;width:91px;text-align:right;font-size:13.3px">-3.40V</div><div class="a st" style="left:204px;top:580px;font-size:13.3px;color:#20b020">1X</div>
<svg class="a" style="left:0;top:0" width="1024" height="600" viewBox="0 0 1024 600" shape-rendering="crispEdges"><path d="M298 539h1v1h-1zM298 595h1v1h-1zM301 539h1v1h-1zM301 595h1v1h-1zM304 539h1v1h-1zM304 595h1v1h-1zM307 539h1v1h-1zM307 595h1v1h-1zM310 539h1v1h-1zM310 595h1v1h-1zM313 539h1v1h-1zM313 595h1v1h-1zM316 539h1v1h-1zM316 595h1v1h-1zM319 539h1v1h-1zM319 595h1v1h-1zM322 539h1v1h-1zM322 595h1v1h-1zM325 539h1v1h-1zM325 595h1v1h-1zM328 539h1v1h-1zM328 595h1v1h-1zM331 539h1v1h-1zM331 595h1v1h-1zM334 539h1v1h-1zM334 595h1v1h-1zM337 539h1v1h-1zM337 595h1v1h-1zM340 539h1v1h-1zM340 595h1v1h-1zM343 539h1v1h-1zM343 595h1v1h-1zM346 539h1v1h-1zM346 595h1v1h-1zM349 539h1v1h-1zM349 595h1v1h-1zM352 539h1v1h-1zM352 595h1v1h-1zM355 539h1v1h-1zM355 595h1v1h-1zM358 539h1v1h-1zM358 595h1v1h-1zM361 539h1v1h-1zM361 595h1v1h-1zM364 539h1v1h-1zM364 595h1v1h-1zM367 539h1v1h-1zM367 595h1v1h-1zM370 539h1v1h-1zM370 595h1v1h-1zM373 539h1v1h-1zM373 595h1v1h-1zM376 539h1v1h-1zM376 595h1v1h-1zM379 539h1v1h-1zM379 595h1v1h-1zM382 539h1v1h-1zM382 595h1v1h-1zM385 539h1v1h-1zM385 595h1v1h-1zM388 539h1v1h-1zM388 595h1v1h-1zM391 539h1v1h-1zM391 595h1v1h-1zM298 539h1v1h-1zM391 539h1v1h-1zM298 542h1v1h-1zM391 542h1v1h-1zM298 545h1v1h-1zM391 545h1v1h-1zM298 548h1v1h-1zM391 548h1v1h-1zM298 551h1v1h-1zM391 551h1v1h-1zM298 554h1v1h-1zM391 554h1v1h-1zM298 557h1v1h-1zM391 557h1v1h-1zM298 560h1v1h-1zM391 560h1v1h-1zM298 563h1v1h-1zM391 563h1v1h-1zM298 566h1v1h-1zM391 566h1v1h-1zM298 569h1v1h-1zM391 569h1v1h-1zM298 572h1v1h-1zM391 572h1v1h-1zM298 575h1v1h-1zM391 575h1v1h-1zM298 578h1v1h-1zM391 578h1v1h-1zM298 581h1v1h-1zM391 581h1v1h-1zM298 584h1v1h-1zM391 584h1v1h-1zM298 587h1v1h-1zM391 587h1v1h-1zM298 590h1v1h-1zM391 590h1v1h-1zM298 593h1v1h-1zM391 593h1v1h-1z" fill="#a4a4a4"/></svg>
<div class="a" style="left:322px;top:567px;width:46px;height:1px;background:#7e7e7e"></div>
<div class="a" style="left:345px;top:552px;width:1px;height:31px;background:#7e7e7e"></div>

<div class="a" style="left:691px;top:539px;width:1px;height:57px;background:#2e2e2e"></div>
<div class="a" style="left:696px;top:539px;width:130px;height:57px;background:#3e3e3e;border-radius:2px"></div>
<div class="a" style="left:696px;top:539px;width:130px;height:19px;background:#1b1b1b"></div>
<div class="a st" style="left:700px;top:542px;">Timebase</div>
<div class="a st" style="left:699px;top:562px;">0.00s</div>
<div class="a st" style="left:699px;top:580px;">5.00Mpts</div>
<div class="a st" style="left:696px;top:562px;width:127px;text-align:right">200us/div</div>
<div class="a st" style="left:696px;top:580px;width:127px;text-align:right">2.50GSa/s</div>

<div class="a" style="left:830px;top:539px;width:110px;height:57px;background:#3e3e3e;border-radius:2px"></div>
<div class="a" style="left:830px;top:539px;width:110px;height:19px;background:#1b1b1b"></div>
<div class="a st" style="left:834px;top:542px;">Trigger</div>
<div class="a st" style="left:833px;top:562px;">Auto</div>
<div class="a st" style="left:833px;top:580px;">Serial</div>
<div class="a st" style="left:830px;top:580px;width:106px;text-align:right">I2S</div>

<div class="a" style="left:944px;top:539px;width:80px;height:57px;background:#1c1c1c"></div>
<div class="a st" style="left:944px;top:563px;width:80px;text-align:center">14:57:33</div>
<div class="a st" style="left:944px;top:580px;width:80px;text-align:center">2019/1/30</div>
<svg class="a" style="left:970px;top:536px" width="54" height="26" viewBox="0 0 54 26">
 <g fill="none" stroke="#a4a4a4" stroke-width="1.3">
  <path d="M13.6 8V19.5M13.6 19.5L9.9 15.5V13.5M13.6 17L17.8 13V11.5"/>
  <rect x="30.4" y="6.6" width="6" height="5.4"/><rect x="26.4" y="15.6" width="6" height="6"/><rect x="35.4" y="15.6" width="6" height="6"/>
  <path d="M33.4 12V14M25 14.4H42"/>
 </g>
 <g fill="#a4a4a4"><path d="M13.6 5.8L11.6 9H15.6Z"/><circle cx="9.9" cy="13" r="1.4"/><circle cx="17.8" cy="11" r="1.4"/><circle cx="13.6" cy="20" r="1.5"/></g>
</svg>
</body></html>
